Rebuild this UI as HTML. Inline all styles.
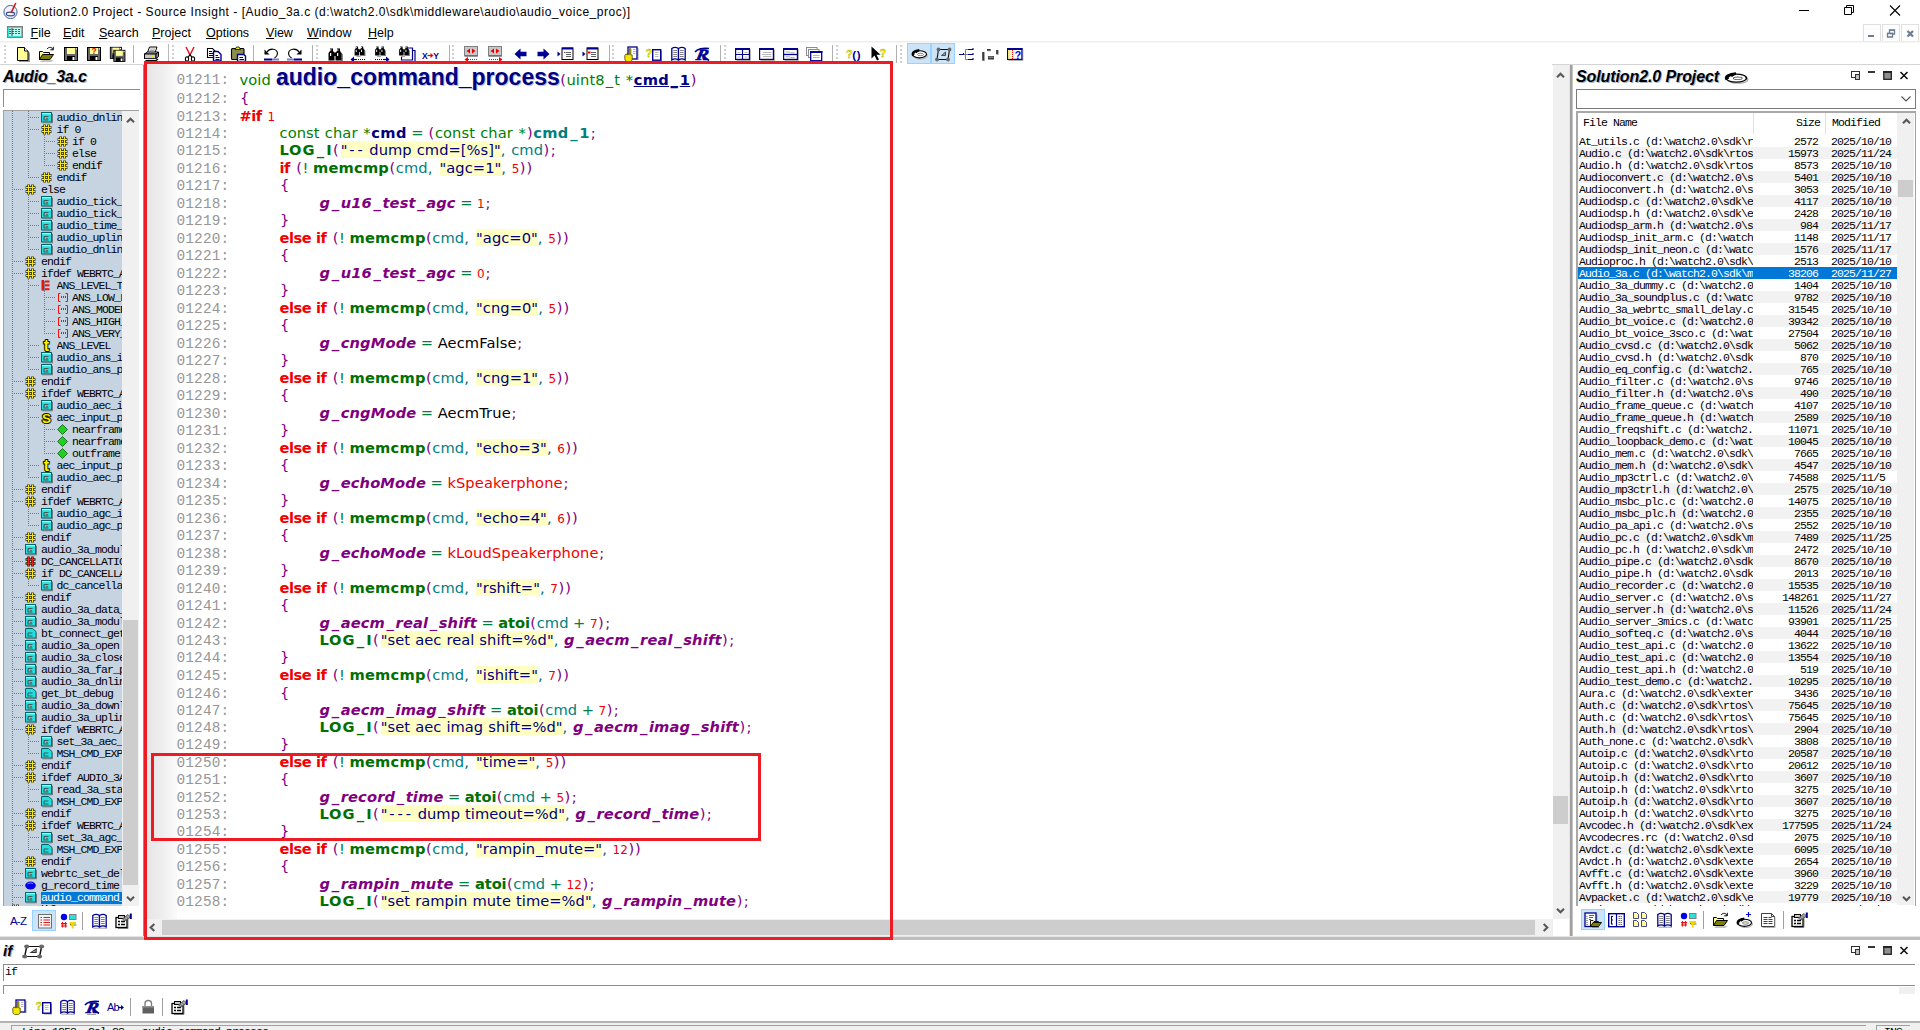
<!DOCTYPE html>
<html><head><meta charset="utf-8"><title>Solution2.0 Project - Source Insight</title>
<style>
*{box-sizing:border-box;margin:0;padding:0}
html,body{width:1920px;height:1030px;overflow:hidden;background:#fff}
body{position:relative;font-family:"Liberation Sans",sans-serif;font-size:12px;color:#000}
.abs{position:absolute}
.ui{font-family:"Liberation Sans",sans-serif}
.mono{font-family:"Liberation Mono",monospace;font-size:11.5px;letter-spacing:-0.9px;white-space:pre}
svg{position:absolute;overflow:visible}
#title{left:23px;top:4px;font-size:12px;line-height:16px;white-space:pre;letter-spacing:0.51px}
.menu{top:25px;font-size:12.5px;line-height:16px;white-space:pre}
.menu u{text-decoration:underline;text-underline-offset:1px}
.ptitle{font-weight:bold;font-style:italic;font-size:16px;line-height:18px;white-space:pre;text-shadow:1px 1px 0 #a8b4c8}
.grip{width:2px;border-left:2px dotted #d0d0d0}
.sep{width:1px;background:#a0a0a0}
/* code */
#code{left:147px;top:64px;width:1405px;height:855px;background:#fff;overflow:hidden}
#gutter{left:0;top:0;width:30px;height:855px;background:linear-gradient(90deg,#e6e6e6 0,#eeeeee 50%,#fafafa 100%)}
.ln{position:absolute;left:29.5px;height:17px;line-height:17px;white-space:pre;font-family:"DejaVu Sans",sans-serif;font-size:14.67px;letter-spacing:0.1px;word-spacing:0.3px;color:#000}
.ln i{font-style:inherit;padding:0 1px}
.pd i,.ld i,.pr i,.fc i,.FC i,.g i,.k i{padding:0 1.5px}
.fn i{padding:0}
.ln .no{display:inline-block;font-family:"Liberation Mono",monospace;font-size:14.4px;letter-spacing:0.16px;color:#969696;line-height:0}
.t{color:#008000}
.p{color:#800080;padding:0 0.45px}
.sc{color:#800080;padding:0 0.85px}
.ln b{font-weight:inherit;padding:0 1.5px}
.op{color:#008040;word-spacing:-0.3px}
.cm{color:#007070;word-spacing:0.8px}
.pd{color:#000080;font-weight:bold;text-decoration:underline;letter-spacing:0.3px}
.ld{color:#000080;font-weight:bold;letter-spacing:0.4px}
.st{color:#008000;padding:0 0.6px}
.pr{color:#008080;font-weight:bold;letter-spacing:0.3px}
.lr{color:#008080}
.fc{color:#007000;font-weight:bold;letter-spacing:0.2px}
.fa{color:#007000;font-weight:bold;letter-spacing:-0.1px}
.FC{color:#007000;font-weight:bold;letter-spacing:0.8px}
.s{color:#000080;background:#ffffc4;margin-left:1.5px;letter-spacing:0.05px}
.n{color:#f00000;font-size:12px}
.k{color:#f00000;font-weight:bold;letter-spacing:-0.5px;margin-right:0.8px}
.g{color:#800080;font-weight:bold;font-style:italic;letter-spacing:0.15px}
.c{color:#000}
.e{color:#f00000}
.fn{line-height:0;font-family:"Liberation Sans",sans-serif;font-weight:bold;font-size:23px;color:#000080;letter-spacing:0;text-shadow:1px 1px 0 #b8c0e0}
/* tree */
#tree{left:3px;top:110px;width:136px;height:796px;background:#c6d3e0;overflow:hidden;border-top:1px solid #a0a0a0;border-left:1px solid #a0a0a0}
.tr{position:absolute;height:12px;line-height:12px;color:#000}

.sb{background:#f0f0f0}
.thumb{background:#cdcdcd}
/* file list */
#flist{left:1576px;top:111px;width:340px;height:795px;background:#fff;overflow:hidden;border:1px solid #a0a0a0;border-top:2px solid #a8a8a8;border-left:2px solid #a8a8a8;border-bottom:none}
.fr{position:absolute;left:0;width:320px;height:12px;line-height:12px}
.fr span{position:absolute;top:1px}
.fr .a{left:1px;width:174px;overflow:hidden}
.fr .b{left:180px;width:60px;text-align:right}
.fr .c{left:253px;color:inherit}
.ev{background:#f2f2f2}
.sel{background:#0078d7;color:#fff}
</style></head><body>

<div class="abs" style="left:0;top:0;width:1920px;height:22px;background:#fff"></div>
<svg style="left:3px;top:2px" width="16" height="17" viewBox="0 0 16 17"><circle cx="7.5" cy="10" r="6.6" fill="#eef3fb" stroke="#4a5f9a" stroke-width="1"/><ellipse cx="7.5" cy="12" rx="4.2" ry="1.8" fill="none" stroke="#33508c" stroke-width="1.2"/><path d="M8 11L12.8 1" stroke="#e01020" stroke-width="1.6"/></svg>
<div id="title" class="abs">Solution2.0 Project - Source Insight - [Audio_3a.c (d:\watch2.0\sdk\middleware\audio\audio_voice_proc)]</div>
<svg style="left:1799px;top:5px" width="110" height="12" viewBox="0 0 110 12"><path d="M0 5.5h10" stroke="#000" stroke-width="1" fill="none"/><path d="M45.5 2.5h7v7h-7zM47.5 2.500v-2h7v7h-2" stroke="#000" stroke-width="1" fill="none"/><path d="M91 0.5l10 10M101 0.5l-10 10" stroke="#000" stroke-width="1.1" fill="none"/></svg>
<svg style="left:7px;top:26px" width="16" height="12" viewBox="0 0 16 12"><rect x="0.5" y="0.5" width="15" height="11" fill="#30e0d0" stroke="#808080"/><rect x="2" y="2" width="12" height="8" fill="#b8fff4"/><path d="M2 3.5h12M2 5.5h12M2 7.5h12" stroke="#008878" stroke-width="1" stroke-dasharray="2 1"/><path d="M5 2v8" stroke="#404040" stroke-width="1"/></svg>
<div class="abs menu" style="left:30.5px"><u>F</u>ile</div>
<div class="abs menu" style="left:63px"><u>E</u>dit</div>
<div class="abs menu" style="left:99px"><u>S</u>earch</div>
<div class="abs menu" style="left:152px"><u>P</u>roject</div>
<div class="abs menu" style="left:206px"><u>O</u>ptions</div>
<div class="abs menu" style="left:266px"><u>V</u>iew</div>
<div class="abs menu" style="left:307px"><u>W</u>indow</div>
<div class="abs menu" style="left:368px"><u>H</u>elp</div>
<div class="abs" style="left:1863px;top:24px;width:18px;height:18px;background:#fdfdfd;border:1px solid #e0e0e0"></div>
<div class="abs" style="left:1882px;top:24px;width:18px;height:18px;background:#fdfdfd;border:1px solid #e0e0e0"></div>
<div class="abs" style="left:1901px;top:24px;width:18px;height:18px;background:#fdfdfd;border:1px solid #e0e0e0"></div>
<svg style="left:1863px;top:24px" width="56" height="17" viewBox="0 0 56 17"><path d="M5 12h6" stroke="#6c7c90" stroke-width="2" fill="none"/><path d="M24.500 9.500h5v3.500h-5zM26.500 9v-3h5v4h-1.500" stroke="#6c7c90" stroke-width="1.300" fill="none"/><path d="M24 9.300h6M26 6.300h6" stroke="#6c7c90" stroke-width="1"/><path d="M44.500 7l5.500 5.500M50 7l-5.500 5.500" stroke="#6c7c90" stroke-width="2.200" fill="none"/></svg>
<div class="abs" style="left:0;top:41px;width:1920px;height:1px;background:#ededed"></div>
<div class="abs" style="left:0;top:42px;width:1920px;height:1px;background:#f6f6f6"></div>
<div class="abs" style="left:0;top:64px;width:1920px;height:1px;background:#d4d4d4"></div>
<div class="abs grip" style="left:4px;top:45px;height:18px"></div>
<div class="abs grip" style="left:172px;top:45px;height:18px"></div>
<div class="abs grip" style="left:316px;top:45px;height:18px"></div>
<div class="abs grip" style="left:452px;top:45px;height:18px"></div>
<div class="abs grip" style="left:612px;top:45px;height:18px"></div>
<div class="abs grip" style="left:724px;top:45px;height:18px"></div>
<div class="abs grip" style="left:836px;top:45px;height:18px"></div>
<div class="abs grip" style="left:900px;top:45px;height:18px"></div>
<div class="abs sep" style="left:133px;top:45px;height:18px;background:#b0b0b0"></div>
<div class="abs sep" style="left:253px;top:45px;height:18px;background:#b0b0b0"></div>
<div class="abs sep" style="left:312px;top:45px;height:18px;background:#b0b0b0"></div>
<div class="abs sep" style="left:449px;top:45px;height:18px;background:#b0b0b0"></div>
<div class="abs sep" style="left:609px;top:45px;height:18px;background:#b0b0b0"></div>
<div class="abs sep" style="left:720px;top:45px;height:18px;background:#b0b0b0"></div>
<div class="abs sep" style="left:832px;top:45px;height:18px;background:#b0b0b0"></div>
<div class="abs sep" style="left:896px;top:45px;height:18px;background:#b0b0b0"></div>
<div class="abs" style="left:168px;top:44px;width:1px;height:20px;background:#b8b8b8"></div>
<div class="abs" style="left:907px;top:43px;width:24px;height:21px;background:#cce4f7;border:1px solid #99d1ff"></div>
<div class="abs" style="left:931px;top:43px;width:24px;height:21px;background:#cce4f7;border:1px solid #99d1ff"></div>
<svg style="left:16px;top:46px" width="17" height="16" viewBox="0 0 17 16"><path d="M3 3h7l4 4v9h-11z" fill="#9a9a9a"/><path d="M1.5 1.5h7l3.5 3.5v9.5h-10.5z" fill="#ffff96" stroke="#000"/><path d="M8.5 1.5v3.5h3.5" fill="#fff" stroke="#000"/></svg>
<svg style="left:38px;top:46px" width="17" height="16" viewBox="0 0 17 16"><path d="M2 15.5h11l3-1h-12z" fill="#8a8a8a"/><path d="M1.5 13.5v-8h3l1 1h6v2" fill="#ffff96" stroke="#000"/><path d="M1.5 13.5l3-5h11l-3.5 5z" fill="#808000" stroke="#000"/><path d="M9 3c2-2.5 5-2 6 0.5M15.3 0.8v3h-3" fill="none" stroke="#000"/></svg>
<svg style="left:63px;top:46px" width="17" height="16" viewBox="0 0 17 16"><g transform="translate(0,0)"><rect x="1.5" y="1.5" width="13" height="13" fill="#686868" stroke="#000"/><rect x="4" y="2" width="8" height="6" fill="#ffff96"/><rect x="4" y="10" width="8" height="4.5" fill="#000"/><rect x="9.5" y="11" width="2" height="3" fill="#fff"/><rect x="12.8" y="2.3" width="1.2" height="1.2" fill="#fff"/></g></svg>
<svg style="left:86px;top:46px" width="17" height="16" viewBox="0 0 17 16"><g transform="translate(0,0)"><rect x="1.5" y="1.5" width="13" height="13" fill="#686868" stroke="#000"/><rect x="4" y="2" width="8" height="6" fill="#ffff96"/><rect x="4" y="10" width="8" height="4.5" fill="#000"/><rect x="9.5" y="11" width="2" height="3" fill="#fff"/><rect x="12.8" y="2.3" width="1.2" height="1.2" fill="#fff"/><text x="8" y="8" font-family="Liberation Sans,sans-serif" font-weight="bold" font-size="8.5" fill="#f00000" text-anchor="middle">?</text></g></svg>
<svg style="left:109px;top:46px" width="17" height="16" viewBox="0 0 17 16"><g transform="scale(.86)"><g transform="translate(0,0)"><rect x="1.5" y="1.5" width="13" height="13" fill="#686868" stroke="#000"/><rect x="4" y="2" width="8" height="6" fill="#ffff96"/><rect x="4" y="10" width="8" height="4.5" fill="#000"/><rect x="9.5" y="11" width="2" height="3" fill="#fff"/><rect x="12.8" y="2.3" width="1.2" height="1.2" fill="#fff"/></g></g><g transform="translate(3.5,3) scale(.86)"><g transform="translate(0,0)"><rect x="1.5" y="1.5" width="13" height="13" fill="#686868" stroke="#000"/><rect x="4" y="2" width="8" height="6" fill="#ffff96"/><rect x="4" y="10" width="8" height="4.5" fill="#000"/><rect x="9.5" y="11" width="2" height="3" fill="#fff"/><rect x="12.8" y="2.3" width="1.2" height="1.2" fill="#fff"/></g></g></svg>
<svg style="left:143px;top:46px" width="17" height="16" viewBox="0 0 17 16"><path d="M4.5 6.5l2-5.5h7.5l-2 5.5z" fill="#fff" stroke="#000"/><path d="M7 3h5M6.500 4.500h5" stroke="#909090" stroke-width=".8"/><path d="M1.500 8l3-2h10.500l-2 2z" fill="#e0e0e0" stroke="#000"/><rect x="1.500" y="8" width="11.500" height="4.500" fill="#c8c8c8" stroke="#000"/><path d="M13 8l2.500-2v4.500l-2.500 2z" fill="#909090" stroke="#000"/><rect x="8" y="9.700" width="3" height="1.300" fill="#e8e800"/><path d="M2.500 14.500h10.500l2-1.500" stroke="#000" stroke-width="1.400" fill="none"/><path d="M2 13.300h11" stroke="#fff" stroke-width=".8"/></svg>
<svg style="left:182px;top:46px" width="17" height="16" viewBox="0 0 17 16"><path d="M4 1l4 8M12 1l-4 8" stroke="#e81020" stroke-width="1.5" fill="none"/><path d="M8 8.5l-2 3M8 8.5l2 3" stroke="#000" stroke-width="1.3"/><ellipse cx="5" cy="13" rx="1.6" ry="2.2" fill="none" stroke="#000" stroke-width="1.1"/><ellipse cx="11" cy="13" rx="1.6" ry="2.2" fill="none" stroke="#000" stroke-width="1.1"/></svg>
<svg style="left:206px;top:46px" width="17" height="16" viewBox="0 0 17 16"><path d="M1.500 2.500h5l2.500 2.500v6.500h-7.500z" fill="#fff" stroke="#000" stroke-width="1.100"/><path d="M3 5.500h3M3 7.500h4.500M3 9.500h4.500" stroke="#000" stroke-width="1"/><path d="M7.500 5.500h4.500l3 3v6.500h-7.500z" fill="#fff" stroke="#000090" stroke-width="1.400"/><path d="M9.500 9.500h2.500M9.500 11.500h4M9.500 13.500h4" stroke="#000090" stroke-width="1"/></svg>
<svg style="left:230px;top:46px" width="17" height="16" viewBox="0 0 17 16"><rect x="1.500" y="2.500" width="12.500" height="11" rx="1" fill="#8c8c50" stroke="#000" stroke-width="1.100"/><path d="M5 3.500l1.500-2.500h2.500l1.500 2.500z" fill="#f0f000" stroke="#000" stroke-width=".8"/><path d="M7.500 8.500h6l2 1.500v5.500h-8z" fill="#fff" stroke="#000090" stroke-width="1.400"/><path d="M9.500 11.500h3.500M9.500 13.500h4.500" stroke="#000090" stroke-width="1"/></svg>
<svg style="left:263px;top:46px" width="17" height="16" viewBox="0 0 17 16"><path d="M4 6c2.500-4 10-4 10.500 1.500c0 2.500-1.500 3.500-3 4.500" fill="none" stroke="#000" stroke-width="1.100"/><path d="M1.500 3.500v5h5z" fill="#000"/><rect x="1" y="12.500" width="8.500" height="2" fill="#000090"/><rect x="10.500" y="12.500" width="1" height="2" fill="#000090"/><rect x="12.500" y="12.500" width="1" height="2" fill="#000090"/><rect x="14.500" y="12.500" width="1" height="2" fill="#000090"/></svg>
<svg style="left:287px;top:46px" width="17" height="16" viewBox="0 0 17 16"><g transform="translate(16,0) scale(-1,1)"><path d="M4 6c2.500-4 10-4 10.500 1.500c0 2.500-1.500 3.500-3 4.500" fill="none" stroke="#000" stroke-width="1.100"/><path d="M1.500 3.500v5h5z" fill="#000"/><rect x="1" y="12.500" width="8.500" height="2" fill="#000090"/><rect x="10.500" y="12.500" width="1" height="2" fill="#000090"/><rect x="12.500" y="12.500" width="1" height="2" fill="#000090"/><rect x="14.500" y="12.500" width="1" height="2" fill="#000090"/></g></svg>
<svg style="left:327px;top:46px" width="17" height="16" viewBox="0 0 17 16"><g transform="translate(0,0) scale(1)"><path d="M4 16.200h5.500v-1h6.500v-7l-2-1.500v8.500h-10z" fill="#8c8c8c"/><path d="M1.500 14.500v-7.500l1.500-2v-2.500h3v2.500l1.500 2v7.500z" fill="#000"/><path d="M8.500 14.500v-7.500l1.500-2v-2.500h3v2.500l1.500 2v7.500z" fill="#000"/><rect x="7" y="6.500" width="2" height="3.500" fill="#000"/><rect x="3" y="7" width="1.200" height="3" fill="#fff"/><rect x="10" y="7" width="1.200" height="3" fill="#fff"/><rect x="3.300" y="3.300" width="1" height="1.500" fill="#fff"/><rect x="10.300" y="3.300" width="1" height="1.500" fill="#fff"/></g></svg>
<svg style="left:350px;top:46px" width="17" height="16" viewBox="0 0 17 16"><g transform="translate(3.5,-1.5) scale(0.75)"><path d="M4 16.200h5.500v-1h6.500v-7l-2-1.500v8.500h-10z" fill="#8c8c8c"/><path d="M1.500 14.500v-7.500l1.500-2v-2.500h3v2.500l1.500 2v7.500z" fill="#000"/><path d="M8.500 14.500v-7.500l1.500-2v-2.500h3v2.500l1.500 2v7.500z" fill="#000"/><rect x="7" y="6.500" width="2" height="3.500" fill="#000"/><rect x="3" y="7" width="1.200" height="3" fill="#fff"/><rect x="10" y="7" width="1.200" height="3" fill="#fff"/><rect x="3.300" y="3.300" width="1" height="1.500" fill="#fff"/><rect x="10.300" y="3.300" width="1" height="1.500" fill="#fff"/></g><path d="M6 13.500h9" stroke="#000090" stroke-width="1.200" stroke-dasharray="1 1"/><path d="M1 13.500h5" stroke="#000090" stroke-width="1.200"/><path d="M0.500 13.500l3.500-3v6z" fill="#000090"/></svg>
<svg style="left:374px;top:46px" width="17" height="16" viewBox="0 0 17 16"><g transform="translate(0,-1.5) scale(0.75)"><path d="M4 16.200h5.500v-1h6.500v-7l-2-1.500v8.500h-10z" fill="#8c8c8c"/><path d="M1.500 14.500v-7.500l1.500-2v-2.500h3v2.500l1.500 2v7.500z" fill="#000"/><path d="M8.500 14.500v-7.500l1.500-2v-2.500h3v2.500l1.500 2v7.500z" fill="#000"/><rect x="7" y="6.500" width="2" height="3.500" fill="#000"/><rect x="3" y="7" width="1.200" height="3" fill="#fff"/><rect x="10" y="7" width="1.200" height="3" fill="#fff"/><rect x="3.300" y="3.300" width="1" height="1.500" fill="#fff"/><rect x="10.300" y="3.300" width="1" height="1.500" fill="#fff"/></g><path d="M1 13.500h9" stroke="#000090" stroke-width="1.200" stroke-dasharray="1 1"/><path d="M10 13.500h5" stroke="#000090" stroke-width="1.200"/><path d="M15.500 13.500l-3.500-3v6z" fill="#000090"/></svg>
<svg style="left:398px;top:46px" width="17" height="16" viewBox="0 0 17 16"><path d="M9 2h5.500v12h-11v-3" fill="none" stroke="#000090" stroke-width="1.200"/><path d="M14.500 4.500h2.500v11h-12" fill="none" stroke="#000090" stroke-width="1.200"/><g transform="translate(0,-1.5) scale(0.75)"><path d="M4 16.200h5.500v-1h6.500v-7l-2-1.500v8.500h-10z" fill="#8c8c8c"/><path d="M1.500 14.500v-7.500l1.500-2v-2.500h3v2.500l1.500 2v7.500z" fill="#000"/><path d="M8.500 14.500v-7.500l1.500-2v-2.500h3v2.500l1.500 2v7.500z" fill="#000"/><rect x="7" y="6.500" width="2" height="3.500" fill="#000"/><rect x="3" y="7" width="1.200" height="3" fill="#fff"/><rect x="10" y="7" width="1.200" height="3" fill="#fff"/><rect x="3.300" y="3.300" width="1" height="1.500" fill="#fff"/><rect x="10.300" y="3.300" width="1" height="1.500" fill="#fff"/></g></svg>
<svg style="left:422px;top:46px" width="17" height="16" viewBox="0 0 17 16"><text x="0" y="12.500" font-family="Liberation Sans,sans-serif" font-weight="bold" font-size="8.500" fill="#000090">X</text><text x="11.300" y="12.500" font-family="Liberation Sans,sans-serif" font-weight="bold" font-size="8.500" fill="#000090">Y</text><path d="M5.500 9.500h4" stroke="#f00000" stroke-width="1.200"/><path d="M11.500 9.500l-3-2.500v5z" fill="#f00000"/></svg>
<svg style="left:464px;top:46px" width="17" height="16" viewBox="0 0 17 16"><rect x="0.500" y="0.500" width="13" height="9.500" fill="#c8c8c8" stroke="#808080"/><rect x="1" y="9" width="12.5" height="1.5" fill="#707070"/><path d="M2.500 5l3.500-2.500v5zM11.500 5l-3.500-2.500v5z" fill="#f00000"/><path d="M4 13.500h10" stroke="#f00000" stroke-width="1.200" stroke-dasharray="1 1"/><path d="M0.500 13.500l3.500-2.500v5z" fill="#f00000"/></svg>
<svg style="left:488px;top:46px" width="17" height="16" viewBox="0 0 17 16"><rect x="0.500" y="0.500" width="13" height="9.500" fill="#c8c8c8" stroke="#808080"/><rect x="1" y="9" width="12.5" height="1.5" fill="#707070"/><path d="M2.500 5l3.500-2.500v5zM11.500 5l-3.500-2.500v5z" fill="#f00000"/><path d="M1 13.500h10" stroke="#f00000" stroke-width="1.200" stroke-dasharray="1 1"/><path d="M14.500 13.500l-3.500-2.500v5z" fill="#f00000"/></svg>
<svg style="left:514px;top:46px" width="17" height="16" viewBox="0 0 17 16"><path d="M0.500 8l6-5.500v3.200h6v4.600h-6v3.200z" fill="#000090"/></svg>
<svg style="left:537px;top:46px" width="17" height="16" viewBox="0 0 17 16"><path d="M12.500 8l-6-5.500v3.200h-6v4.600h6v3.200z" fill="#000090"/></svg>
<svg style="left:557px;top:46px" width="17" height="16" viewBox="0 0 17 16"><path d="M0.500 5.500l3 2.500l-3 2.500z" fill="#000090"/><rect x="5" y="2" width="11" height="11.500" fill="#fff" stroke="#000"/><rect x="5" y="1.500" width="11" height="2" fill="#000090"/><path d="M9 6.500h5M9 8.500h5M9 10.500h5" stroke="#606060" stroke-width="1"/><path d="M7 6.500h1.500" stroke="#606060" stroke-width="1"/></svg>
<svg style="left:582px;top:46px" width="17" height="16" viewBox="0 0 17 16"><path d="M0.500 5.500l3 2.500l-3 2.500z" fill="#000090"/><rect x="5" y="2" width="11" height="11.500" fill="#fff" stroke="#000"/><rect x="5" y="1.500" width="11" height="2" fill="#000090"/><path d="M9 6.500h5M9 8.500h5M9 10.500h5" stroke="#606060" stroke-width="1"/><rect x="6" y="5.500" width="2.500" height="2" fill="#f00000"/></svg>
<svg style="left:623px;top:46px" width="17" height="16" viewBox="0 0 17 16"><rect x="14.500" y="2" width="1" height="12" fill="#a0a0a0"/><rect x="5" y="1" width="9" height="12" fill="#fff" stroke="#000090" stroke-width="1.300"/><path d="M10 3.500h2.500M10 5.500h2.500M10 7.500h2.500" stroke="#b0b0b0" stroke-width="1"/><path d="M1.800 9.500v3c0 2 1 3 2.700 3h2.200c1.500 0 2.500-1 2.500-2.500v-4h-1.400v-6.300h-1.500v6h-.6v-1h-1.200v1h-.6v-.6h-1.100z" fill="#f4e800" stroke="#504000" stroke-width=".8"/></svg>
<svg style="left:646px;top:46px" width="17" height="16" viewBox="0 0 17 16"><text x="-0.500" y="10.500" font-family="Liberation Sans,sans-serif" font-weight="bold" font-size="11" fill="#fcf400" stroke="#909000" stroke-width=".3">?</text><rect x="15" y="5" width="1" height="10" fill="#a0a0a0"/><rect x="8" y="14.500" width="8" height="1" fill="#a0a0a0"/><rect x="6.700" y="3.700" width="8" height="10.500" fill="#fff" stroke="#000090" stroke-width="1.400"/><path d="M9 6.500h3.500M9 8.500h3.500M9 10.500h3.500" stroke="#b8b8b8" stroke-width="1"/></svg>
<svg style="left:671px;top:46px" width="17" height="16" viewBox="0 0 17 16"><path d="M0.800 2.500c2-1.300 4.500-1.300 6.700 0v11.500c-2.200-1.300-4.700-1.300-6.700 0z" fill="#fff" stroke="#000090" stroke-width="1.300"/><path d="M7.500 2.500c2.200-1.300 4.700-1.300 6.700 0v11.500c-2-1.300-4.500-1.300-6.700 0z" fill="#fff" stroke="#000090" stroke-width="1.300"/><path d="M2.300 4.500h3.700M2.300 6.500h3.700M2.300 8.500h3.700M2.300 10.500h3.700M9 4.500h3.700M9 6.500h3.700M9 8.500h3.700M9 10.500h3.700" stroke="#707070" stroke-width=".9"/><path d="M1.500 15.200h13.500" stroke="#a0a0a0" stroke-width="1"/></svg>
<svg style="left:694px;top:46px" width="17" height="16" viewBox="0 0 17 16"><text x="1" y="13.500" font-family="Liberation Serif,serif" font-weight="bold" font-style="italic" font-size="16" fill="#000090" stroke="#000090" stroke-width=".6" transform="skewX(-12) translate(3,0) scale(1.15,1)">R</text><path d="M1 6c2-3 8-4.500 14-3.500" stroke="#000090" stroke-width="1.500" fill="none"/><path d="M9 10l6 4.500" stroke="#000090" stroke-width="1.600"/><path d="M3 15.500h9" stroke="#a0a0a0" stroke-width="1"/></svg>
<svg style="left:735px;top:46px" width="17" height="16" viewBox="0 0 17 16"><rect x="14.800" y="3.500" width="1" height="11" fill="#a0a0a0"/><rect x="1.500" y="13.800" width="14" height="1" fill="#a0a0a0"/><rect x="0.600" y="2.600" width="13.800" height="10.800" fill="#fff" stroke="#000090" stroke-width="1.200"/><rect x="0" y="2" width="15" height="2" fill="#000090"/><path d="M7.500 3v10.500M0.500 8.500h14" stroke="#000090" stroke-width="1.200"/><path d="M2.500 6.500h3M9.500 6.500h3M2.500 11h3M9.500 11h3" stroke="#b8b8b8" stroke-width="1"/></svg>
<svg style="left:759px;top:46px" width="17" height="16" viewBox="0 0 17 16"><rect x="14.800" y="3.500" width="1" height="11" fill="#a0a0a0"/><rect x="1.500" y="13.800" width="14" height="1" fill="#a0a0a0"/><rect x="0.600" y="2.600" width="13.800" height="10.800" fill="#fff" stroke="#000090" stroke-width="1.200"/><rect x="0" y="2" width="15" height="2" fill="#000090"/><path d="M4 6.500h8.500M3 8.500h9.500M4 10.500h8.500" stroke="#b8b8b8" stroke-width="1"/></svg>
<svg style="left:783px;top:46px" width="17" height="16" viewBox="0 0 17 16"><rect x="14.800" y="3.500" width="1" height="11" fill="#a0a0a0"/><rect x="1.500" y="13.800" width="14" height="1" fill="#a0a0a0"/><rect x="0.600" y="2.600" width="13.800" height="10.800" fill="#fff" stroke="#000090" stroke-width="1.200"/><rect x="0" y="2" width="15" height="2" fill="#000090"/><path d="M0.500 8.500h14" stroke="#000090" stroke-width="1.300"/><path d="M2.500 6h4l1 .8h4M2.500 10.800h4l1 .8h4" stroke="#a0a0a0" stroke-width=".9" fill="none"/></svg>
<svg style="left:806px;top:46px" width="17" height="16" viewBox="0 0 17 16"><rect x="0.500" y="1.500" width="10.500" height="8" fill="#fff" stroke="#8c8c8c"/><rect x="2.500" y="3.500" width="10.500" height="8" fill="#fff" stroke="#8c8c8c"/><rect x="4.700" y="5.700" width="11" height="9" fill="#fff" stroke="#000090" stroke-width="1.300"/><rect x="4" y="5" width="12.400" height="2" fill="#000090"/><path d="M7 9.500h6.500M7 11.500h6.500" stroke="#b0b0b0" stroke-width="1"/></svg>
<svg style="left:846px;top:46px" width="17" height="16" viewBox="0 0 17 16"><text x="0" y="11.500" font-family="Liberation Sans,sans-serif" font-weight="bold" font-size="11" fill="#fcf400" stroke="#909000" stroke-width=".3">?</text><text x="6.300" y="12.500" font-family="Liberation Sans,sans-serif" font-weight="bold" font-size="11.500" fill="#000090" letter-spacing="0.5">()</text></svg>
<svg style="left:871px;top:46px" width="17" height="16" viewBox="0 0 17 16"><path d="M0.500 0.500v12l3-3l2.500 5l2-1l-2.500-4.800h4z" fill="#000"/><text x="8.500" y="11" font-family="Liberation Sans,sans-serif" font-weight="bold" font-size="11" fill="#fcf400" stroke="#909000" stroke-width=".3">?</text></svg>
<svg style="left:911px;top:46px" width="17" height="16" viewBox="0 0 17 16"><ellipse cx="9.500" cy="9.500" rx="7" ry="3.500" fill="none" stroke="#a8a8a8" stroke-width="1"/><ellipse cx="8.500" cy="8.300" rx="7" ry="3.600" fill="#fff" stroke="#000" stroke-width="1.100"/><path d="M2.300 9.500c-1.500-2.500 1.500-5 6-5.300" fill="none" stroke="#000" stroke-width="2.600"/><path d="M7.500 4.500l-2.500 2.200" stroke="#000" stroke-width="1.500"/><ellipse cx="9.500" cy="8.500" rx="3" ry="1.200" fill="none" stroke="#606060" stroke-width=".8"/></svg>
<svg style="left:935px;top:46px" width="17" height="16" viewBox="0 0 17 16"><path d="M3.500 3.500h11l-1.500 10h-11z" fill="none" stroke="#101010" stroke-width="1.100"/><path d="M6.500 9.500h4v-3.500z" fill="#a0a0a0" stroke="#303030" stroke-width=".8"/><circle cx="3.500" cy="3.500" r="1.900" fill="#686868"/><circle cx="14.500" cy="3.500" r="1.900" fill="#686868"/><circle cx="2" cy="13.500" r="1.900" fill="#686868"/><circle cx="13" cy="13.500" r="1.900" fill="#686868"/></svg>
<svg style="left:959px;top:46px" width="17" height="16" viewBox="0 0 17 16"><path d="M4 8.500h2.500M6.500 3.500v10M6.500 3.500h3M6.500 8.500h3M6.500 13.500h3" fill="none" stroke="#808080" stroke-width="1.100"/><path d="M0 8.500h4.500v-1.500M9 3.500h5v-1.500M9 8.500h5v-1.500M9 13.500h5v-1.500" fill="none" stroke="#000090" stroke-width="1.100"/></svg>
<svg style="left:982px;top:46px" width="17" height="16" viewBox="0 0 17 16"><rect x="0.300" y="6" width="2.500" height="9" fill="#909090"/><rect x="0.300" y="6" width="1.700" height="8.300" fill="#383838"/><rect x="5" y="3" width="4" height="2.200" fill="#909090"/><rect x="5" y="3" width="3.300" height="1.500" fill="#383838"/><rect x="6" y="10" width="6" height="3.500" fill="#383838"/><rect x="6.500" y="10.500" width="5" height="1.500" fill="#808080"/><rect x="14.200" y="4" width="2.500" height="4.700" fill="#909090"/><rect x="14.200" y="4" width="1.700" height="4" fill="#383838"/></svg>
<svg style="left:1007px;top:46px" width="17" height="16" viewBox="0 0 17 16"><rect x="15.300" y="3.500" width="1" height="11" fill="#a0a0a0"/><rect x="1.500" y="13.800" width="14.500" height="1" fill="#a0a0a0"/><rect x="0.600" y="2.600" width="14.300" height="10.800" fill="#fff" stroke="#000090" stroke-width="1.200"/><rect x="0" y="2" width="15.500" height="2" fill="#000090"/><rect x="1.200" y="4" width="2.300" height="8.800" fill="#f8ec70"/><path d="M5.500 4v9" stroke="#f00000" stroke-width="1" stroke-dasharray="1 1"/><text x="7.800" y="12.500" font-family="Liberation Sans,sans-serif" font-weight="bold" font-size="10.500" fill="#0000e8">?</text></svg>
<div class="abs ptitle" style="left:3px;top:68px;font-size:16px;letter-spacing:-0.15px">Audio_3a.c</div>
<div class="abs" style="left:3px;top:89px;width:137px;height:18px;background:#fff;border-top:1px solid #8c8c8c;border-left:1px solid #8c8c8c"></div>
<div id="tree" class="abs">
<svg style="left:0px;top:0px" width="120" height="800" viewBox="0 0 120 800"><path d="M26 6.5H36 M24.5 0V7 M26 18.5H36 M24.5 0V19 M42 30.5H52 M40.5 24V31 M42 42.5H52 M40.5 24V43 M42 54.5H52 M40.5 24V55 M26 66.5H36 M24.5 0V67 M10 78.5H20 M8.5 0V79 M26 90.5H36 M24.5 84V91 M26 102.5H36 M24.5 84V103 M26 114.5H36 M24.5 84V115 M26 126.5H36 M24.5 84V127 M26 138.5H36 M24.5 84V139 M10 150.5H20 M8.5 0V151 M10 162.5H20 M8.5 0V163 M26 174.5H36 M24.5 168V175 M42 186.5H52 M40.5 180V187 M42 198.5H52 M40.5 180V199 M42 210.5H52 M40.5 180V211 M42 222.5H52 M40.5 180V223 M26 234.5H36 M24.5 168V235 M26 246.5H36 M24.5 168V247 M26 258.5H36 M24.5 168V259 M10 270.5H20 M8.5 0V271 M10 282.5H20 M8.5 0V283 M26 294.5H36 M24.5 288V295 M26 306.5H36 M24.5 288V307 M42 318.5H52 M40.5 312V319 M42 330.5H52 M40.5 312V331 M42 342.5H52 M40.5 312V343 M26 354.5H36 M24.5 288V355 M26 366.5H36 M24.5 288V367 M10 378.5H20 M8.5 0V379 M10 390.5H20 M8.5 0V391 M26 402.5H36 M24.5 396V403 M26 414.5H36 M24.5 396V415 M10 426.5H20 M8.5 0V427 M10 438.5H20 M8.5 0V439 M10 450.5H20 M8.5 0V451 M10 462.5H20 M8.5 0V463 M26 474.5H36 M24.5 468V475 M10 486.5H20 M8.5 0V487 M10 498.5H20 M8.5 0V499 M10 510.5H20 M8.5 0V511 M10 522.5H20 M8.5 0V523 M10 534.5H20 M8.5 0V535 M10 546.5H20 M8.5 0V547 M10 558.5H20 M8.5 0V559 M10 570.5H20 M8.5 0V571 M10 582.5H20 M8.5 0V583 M10 594.5H20 M8.5 0V595 M10 606.5H20 M8.5 0V607 M10 618.5H20 M8.5 0V619 M26 630.5H36 M24.5 624V631 M26 642.5H36 M24.5 624V643 M10 654.5H20 M8.5 0V655 M10 666.5H20 M8.5 0V667 M26 678.5H36 M24.5 672V679 M26 690.5H36 M24.5 672V691 M10 702.5H20 M8.5 0V703 M10 714.5H20 M8.5 0V715 M26 726.5H36 M24.5 720V727 M26 738.5H36 M24.5 720V739 M10 750.5H20 M8.5 0V751 M10 762.5H20 M8.5 0V763 M10 774.5H20 M8.5 0V775 M10 786.5H20 M8.5 0V787 M8.5 0V800" stroke="#707880" stroke-width="1" stroke-dasharray="1 1" fill="none"/></svg>
<svg style="left:37px;top:1px" width="12" height="12" viewBox="0 0 12 12"><rect x="0.500" y="0.500" width="10" height="9.500" fill="#20e0e0" stroke="#006868"/><rect x="1" y="1" width="9" height="1.200" fill="#a0ffff"/><path d="M3 4.500h4.500M3 4.500v3.500h4.500" stroke="#405858" stroke-width="1.100" fill="none"/><rect x="5" y="6" width="2" height="1.500" fill="#607070"/><path d="M1.500 10.800h10v-9" stroke="#707880" stroke-width="1" fill="none"/></svg>
<div class="tr mono" style="left:52.5px;top:1px;width:65.5px;overflow:hidden;">audio_dnlink_</div>
<svg style="left:37px;top:13px" width="12" height="12" viewBox="0 0 12 12"><path d="M3.500 0.500v10M7.500 0.500v10M0.500 3.500h10M0.500 7.500h10" stroke="#202000" stroke-width="2.600"/><path d="M3.500 0.800v9.400M7.500 0.800v9.400M0.800 3.500h9.400M0.800 7.500h9.400" stroke="#ffe800" stroke-width="1.200"/></svg>
<div class="tr mono" style="left:52.5px;top:13px;width:65.5px;overflow:hidden;">if 0</div>
<svg style="left:53px;top:25px" width="12" height="12" viewBox="0 0 12 12"><path d="M3.500 0.500v10M7.500 0.500v10M0.500 3.500h10M0.500 7.500h10" stroke="#202000" stroke-width="2.600"/><path d="M3.500 0.800v9.400M7.500 0.800v9.400M0.800 3.500h9.400M0.800 7.500h9.400" stroke="#ffe800" stroke-width="1.200"/></svg>
<div class="tr mono" style="left:68px;top:25px;width:50px;overflow:hidden;">if 0</div>
<svg style="left:53px;top:37px" width="12" height="12" viewBox="0 0 12 12"><path d="M3.500 0.500v10M7.500 0.500v10M0.500 3.500h10M0.500 7.500h10" stroke="#202000" stroke-width="2.600"/><path d="M3.500 0.800v9.400M7.500 0.800v9.400M0.800 3.500h9.400M0.800 7.500h9.400" stroke="#ffe800" stroke-width="1.200"/></svg>
<div class="tr mono" style="left:68px;top:37px;width:50px;overflow:hidden;">else</div>
<svg style="left:53px;top:49px" width="12" height="12" viewBox="0 0 12 12"><path d="M3.500 0.500v10M7.500 0.500v10M0.500 3.500h10M0.500 7.500h10" stroke="#202000" stroke-width="2.600"/><path d="M3.500 0.800v9.400M7.500 0.800v9.400M0.800 3.500h9.400M0.800 7.500h9.400" stroke="#ffe800" stroke-width="1.200"/></svg>
<div class="tr mono" style="left:68px;top:49px;width:50px;overflow:hidden;">endif</div>
<svg style="left:37px;top:61px" width="12" height="12" viewBox="0 0 12 12"><path d="M3.500 0.500v10M7.500 0.500v10M0.500 3.500h10M0.500 7.500h10" stroke="#202000" stroke-width="2.600"/><path d="M3.500 0.800v9.400M7.500 0.800v9.400M0.800 3.500h9.400M0.800 7.500h9.400" stroke="#ffe800" stroke-width="1.200"/></svg>
<div class="tr mono" style="left:52.5px;top:61px;width:65.5px;overflow:hidden;">endif</div>
<svg style="left:21px;top:73px" width="12" height="12" viewBox="0 0 12 12"><path d="M3.500 0.500v10M7.500 0.500v10M0.500 3.500h10M0.500 7.500h10" stroke="#202000" stroke-width="2.600"/><path d="M3.500 0.800v9.400M7.500 0.800v9.400M0.800 3.500h9.400M0.800 7.500h9.400" stroke="#ffe800" stroke-width="1.200"/></svg>
<div class="tr mono" style="left:37px;top:73px;width:81px;overflow:hidden;">else</div>
<svg style="left:37px;top:85px" width="12" height="12" viewBox="0 0 12 12"><rect x="0.500" y="0.500" width="10" height="9.500" fill="#20e0e0" stroke="#006868"/><rect x="1" y="1" width="9" height="1.200" fill="#a0ffff"/><path d="M3 4.500h4.500M3 4.500v3.500h4.500" stroke="#405858" stroke-width="1.100" fill="none"/><rect x="5" y="6" width="2" height="1.500" fill="#607070"/><path d="M1.500 10.800h10v-9" stroke="#707880" stroke-width="1" fill="none"/></svg>
<div class="tr mono" style="left:52.5px;top:85px;width:65.5px;overflow:hidden;">audio_tick_</div>
<svg style="left:37px;top:97px" width="12" height="12" viewBox="0 0 12 12"><rect x="0.500" y="0.500" width="10" height="9.500" fill="#20e0e0" stroke="#006868"/><rect x="1" y="1" width="9" height="1.200" fill="#a0ffff"/><path d="M3 4.500h4.500M3 4.500v3.500h4.500" stroke="#405858" stroke-width="1.100" fill="none"/><rect x="5" y="6" width="2" height="1.500" fill="#607070"/><path d="M1.500 10.800h10v-9" stroke="#707880" stroke-width="1" fill="none"/></svg>
<div class="tr mono" style="left:52.5px;top:97px;width:65.5px;overflow:hidden;">audio_tick_</div>
<svg style="left:37px;top:109px" width="12" height="12" viewBox="0 0 12 12"><rect x="0.500" y="0.500" width="10" height="9.500" fill="#20e0e0" stroke="#006868"/><rect x="1" y="1" width="9" height="1.200" fill="#a0ffff"/><path d="M3 4.500h4.500M3 4.500v3.500h4.500" stroke="#405858" stroke-width="1.100" fill="none"/><rect x="5" y="6" width="2" height="1.500" fill="#607070"/><path d="M1.500 10.800h10v-9" stroke="#707880" stroke-width="1" fill="none"/></svg>
<div class="tr mono" style="left:52.5px;top:109px;width:65.5px;overflow:hidden;">audio_time_</div>
<svg style="left:37px;top:121px" width="12" height="12" viewBox="0 0 12 12"><rect x="0.500" y="0.500" width="10" height="9.500" fill="#20e0e0" stroke="#006868"/><rect x="1" y="1" width="9" height="1.200" fill="#a0ffff"/><path d="M3 4.500h4.500M3 4.500v3.500h4.500" stroke="#405858" stroke-width="1.100" fill="none"/><rect x="5" y="6" width="2" height="1.500" fill="#607070"/><path d="M1.500 10.800h10v-9" stroke="#707880" stroke-width="1" fill="none"/></svg>
<div class="tr mono" style="left:52.5px;top:121px;width:65.5px;overflow:hidden;">audio_uplin</div>
<svg style="left:37px;top:133px" width="12" height="12" viewBox="0 0 12 12"><rect x="0.500" y="0.500" width="10" height="9.500" fill="#20e0e0" stroke="#006868"/><rect x="1" y="1" width="9" height="1.200" fill="#a0ffff"/><path d="M3 4.500h4.500M3 4.500v3.500h4.500" stroke="#405858" stroke-width="1.100" fill="none"/><rect x="5" y="6" width="2" height="1.500" fill="#607070"/><path d="M1.500 10.800h10v-9" stroke="#707880" stroke-width="1" fill="none"/></svg>
<div class="tr mono" style="left:52.5px;top:133px;width:65.5px;overflow:hidden;">audio_dnlin</div>
<svg style="left:21px;top:145px" width="12" height="12" viewBox="0 0 12 12"><path d="M3.500 0.500v10M7.500 0.500v10M0.500 3.500h10M0.500 7.500h10" stroke="#202000" stroke-width="2.600"/><path d="M3.500 0.800v9.400M7.500 0.800v9.400M0.800 3.500h9.400M0.800 7.500h9.400" stroke="#ffe800" stroke-width="1.200"/></svg>
<div class="tr mono" style="left:37px;top:145px;width:81px;overflow:hidden;">endif</div>
<svg style="left:21px;top:157px" width="12" height="12" viewBox="0 0 12 12"><path d="M3.500 0.500v10M7.500 0.500v10M0.500 3.500h10M0.500 7.500h10" stroke="#202000" stroke-width="2.600"/><path d="M3.500 0.800v9.400M7.500 0.800v9.400M0.800 3.500h9.400M0.800 7.500h9.400" stroke="#ffe800" stroke-width="1.200"/></svg>
<div class="tr mono" style="left:37px;top:157px;width:81px;overflow:hidden;">ifdef WEBRTC_AN</div>
<svg style="left:37px;top:169px" width="12" height="12" viewBox="0 0 12 12"><rect x="1.500" y="1" width="2.600" height="10" fill="#808890"/><rect x="0.500" y="0" width="2.600" height="10.500" fill="#f01010"/><rect x="4" y="0.500" width="4.500" height="2" fill="#f01010"/><rect x="4" y="4.300" width="4.500" height="2" fill="#f01010"/><rect x="4" y="8.200" width="4.500" height="2" fill="#f01010"/></svg>
<div class="tr mono" style="left:52.5px;top:169px;width:65.5px;overflow:hidden;">ANS_LEVEL_T</div>
<svg style="left:53px;top:181px" width="12" height="12" viewBox="0 0 12 12"><path d="M3.500 1.500h-2v8h2M8.500 1.500h2v8h-2" stroke="#f01010" stroke-width="1" fill="none"/><rect x="4" y="4" width="1" height="2" fill="#f01010"/><rect x="6" y="4" width="1" height="2" fill="#f01010"/><rect x="8" y="4" width="1" height="2" fill="#f01010"/></svg>
<div class="tr mono" style="left:68px;top:181px;width:50px;overflow:hidden;">ANS_LOW_L</div>
<svg style="left:53px;top:193px" width="12" height="12" viewBox="0 0 12 12"><path d="M3.500 1.500h-2v8h2M8.500 1.500h2v8h-2" stroke="#f01010" stroke-width="1" fill="none"/><rect x="4" y="4" width="1" height="2" fill="#f01010"/><rect x="6" y="4" width="1" height="2" fill="#f01010"/><rect x="8" y="4" width="1" height="2" fill="#f01010"/></svg>
<div class="tr mono" style="left:68px;top:193px;width:50px;overflow:hidden;">ANS_MODER</div>
<svg style="left:53px;top:205px" width="12" height="12" viewBox="0 0 12 12"><path d="M3.500 1.500h-2v8h2M8.500 1.500h2v8h-2" stroke="#f01010" stroke-width="1" fill="none"/><rect x="4" y="4" width="1" height="2" fill="#f01010"/><rect x="6" y="4" width="1" height="2" fill="#f01010"/><rect x="8" y="4" width="1" height="2" fill="#f01010"/></svg>
<div class="tr mono" style="left:68px;top:205px;width:50px;overflow:hidden;">ANS_HIGH_</div>
<svg style="left:53px;top:217px" width="12" height="12" viewBox="0 0 12 12"><path d="M3.500 1.500h-2v8h2M8.500 1.500h2v8h-2" stroke="#f01010" stroke-width="1" fill="none"/><rect x="4" y="4" width="1" height="2" fill="#f01010"/><rect x="6" y="4" width="1" height="2" fill="#f01010"/><rect x="8" y="4" width="1" height="2" fill="#f01010"/></svg>
<div class="tr mono" style="left:68px;top:217px;width:50px;overflow:hidden;">ANS_VERY_</div>
<svg style="left:37px;top:229px" width="12" height="12" viewBox="0 0 12 12"><text x="5.500" y="10.500" text-anchor="middle" font-family="Liberation Sans,sans-serif" font-weight="bold" font-size="16" fill="#ffee00" stroke="#101000" stroke-width="2" paint-order="stroke">t</text></svg>
<div class="tr mono" style="left:52.5px;top:229px;width:65.5px;overflow:hidden;">ANS_LEVEL</div>
<svg style="left:37px;top:241px" width="12" height="12" viewBox="0 0 12 12"><rect x="0.500" y="0.500" width="10" height="9.500" fill="#20e0e0" stroke="#006868"/><rect x="1" y="1" width="9" height="1.200" fill="#a0ffff"/><path d="M3 4.500h4.500M3 4.500v3.500h4.500" stroke="#405858" stroke-width="1.100" fill="none"/><rect x="5" y="6" width="2" height="1.500" fill="#607070"/><path d="M1.500 10.800h10v-9" stroke="#707880" stroke-width="1" fill="none"/></svg>
<div class="tr mono" style="left:52.5px;top:241px;width:65.5px;overflow:hidden;">audio_ans_i</div>
<svg style="left:37px;top:253px" width="12" height="12" viewBox="0 0 12 12"><rect x="0.500" y="0.500" width="10" height="9.500" fill="#20e0e0" stroke="#006868"/><rect x="1" y="1" width="9" height="1.200" fill="#a0ffff"/><path d="M3 4.500h4.500M3 4.500v3.500h4.500" stroke="#405858" stroke-width="1.100" fill="none"/><rect x="5" y="6" width="2" height="1.500" fill="#607070"/><path d="M1.500 10.800h10v-9" stroke="#707880" stroke-width="1" fill="none"/></svg>
<div class="tr mono" style="left:52.5px;top:253px;width:65.5px;overflow:hidden;">audio_ans_p</div>
<svg style="left:21px;top:265px" width="12" height="12" viewBox="0 0 12 12"><path d="M3.500 0.500v10M7.500 0.500v10M0.500 3.500h10M0.500 7.500h10" stroke="#202000" stroke-width="2.600"/><path d="M3.500 0.800v9.400M7.500 0.800v9.400M0.800 3.500h9.400M0.800 7.500h9.400" stroke="#ffe800" stroke-width="1.200"/></svg>
<div class="tr mono" style="left:37px;top:265px;width:81px;overflow:hidden;">endif</div>
<svg style="left:21px;top:277px" width="12" height="12" viewBox="0 0 12 12"><path d="M3.500 0.500v10M7.500 0.500v10M0.500 3.500h10M0.500 7.500h10" stroke="#202000" stroke-width="2.600"/><path d="M3.500 0.800v9.400M7.500 0.800v9.400M0.800 3.500h9.400M0.800 7.500h9.400" stroke="#ffe800" stroke-width="1.200"/></svg>
<div class="tr mono" style="left:37px;top:277px;width:81px;overflow:hidden;">ifdef WEBRTC_AE</div>
<svg style="left:37px;top:289px" width="12" height="12" viewBox="0 0 12 12"><rect x="0.500" y="0.500" width="10" height="9.500" fill="#20e0e0" stroke="#006868"/><rect x="1" y="1" width="9" height="1.200" fill="#a0ffff"/><path d="M3 4.500h4.500M3 4.500v3.500h4.500" stroke="#405858" stroke-width="1.100" fill="none"/><rect x="5" y="6" width="2" height="1.500" fill="#607070"/><path d="M1.500 10.800h10v-9" stroke="#707880" stroke-width="1" fill="none"/></svg>
<div class="tr mono" style="left:52.5px;top:289px;width:65.5px;overflow:hidden;">audio_aec_i</div>
<svg style="left:37px;top:301px" width="12" height="12" viewBox="0 0 12 12"><text x="5.500" y="10.500" text-anchor="middle" font-family="Liberation Sans,sans-serif" font-weight="bold" font-size="13.5" fill="#ffee00" stroke="#101000" stroke-width="2" paint-order="stroke">S</text></svg>
<div class="tr mono" style="left:52.5px;top:301px;width:65.5px;overflow:hidden;">aec_input_p</div>
<svg style="left:53px;top:313px" width="12" height="12" viewBox="0 0 12 12"><path d="M5.500 0.500l5 5l-5 5l-5-5z" fill="#20d020" stroke="#106010" stroke-width=".8"/></svg>
<div class="tr mono" style="left:68px;top:313px;width:50px;overflow:hidden;">nearframe</div>
<svg style="left:53px;top:325px" width="12" height="12" viewBox="0 0 12 12"><path d="M5.500 0.500l5 5l-5 5l-5-5z" fill="#20d020" stroke="#106010" stroke-width=".8"/></svg>
<div class="tr mono" style="left:68px;top:325px;width:50px;overflow:hidden;">nearframe</div>
<svg style="left:53px;top:337px" width="12" height="12" viewBox="0 0 12 12"><path d="M5.500 0.500l5 5l-5 5l-5-5z" fill="#20d020" stroke="#106010" stroke-width=".8"/></svg>
<div class="tr mono" style="left:68px;top:337px;width:50px;overflow:hidden;">outframe</div>
<svg style="left:37px;top:349px" width="12" height="12" viewBox="0 0 12 12"><text x="5.500" y="10.500" text-anchor="middle" font-family="Liberation Sans,sans-serif" font-weight="bold" font-size="16" fill="#ffee00" stroke="#101000" stroke-width="2" paint-order="stroke">t</text></svg>
<div class="tr mono" style="left:52.5px;top:349px;width:65.5px;overflow:hidden;">aec_input_p</div>
<svg style="left:37px;top:361px" width="12" height="12" viewBox="0 0 12 12"><rect x="0.500" y="0.500" width="10" height="9.500" fill="#20e0e0" stroke="#006868"/><rect x="1" y="1" width="9" height="1.200" fill="#a0ffff"/><path d="M3 4.500h4.500M3 4.500v3.500h4.500" stroke="#405858" stroke-width="1.100" fill="none"/><rect x="5" y="6" width="2" height="1.500" fill="#607070"/><path d="M1.500 10.800h10v-9" stroke="#707880" stroke-width="1" fill="none"/></svg>
<div class="tr mono" style="left:52.5px;top:361px;width:65.5px;overflow:hidden;">audio_aec_p</div>
<svg style="left:21px;top:373px" width="12" height="12" viewBox="0 0 12 12"><path d="M3.500 0.500v10M7.500 0.500v10M0.500 3.500h10M0.500 7.500h10" stroke="#202000" stroke-width="2.600"/><path d="M3.500 0.800v9.400M7.500 0.800v9.400M0.800 3.500h9.400M0.800 7.500h9.400" stroke="#ffe800" stroke-width="1.200"/></svg>
<div class="tr mono" style="left:37px;top:373px;width:81px;overflow:hidden;">endif</div>
<svg style="left:21px;top:385px" width="12" height="12" viewBox="0 0 12 12"><path d="M3.500 0.500v10M7.500 0.500v10M0.500 3.500h10M0.500 7.500h10" stroke="#202000" stroke-width="2.600"/><path d="M3.500 0.800v9.400M7.500 0.800v9.400M0.800 3.500h9.400M0.800 7.500h9.400" stroke="#ffe800" stroke-width="1.200"/></svg>
<div class="tr mono" style="left:37px;top:385px;width:81px;overflow:hidden;">ifdef WEBRTC_AG</div>
<svg style="left:37px;top:397px" width="12" height="12" viewBox="0 0 12 12"><rect x="0.500" y="0.500" width="10" height="9.500" fill="#20e0e0" stroke="#006868"/><rect x="1" y="1" width="9" height="1.200" fill="#a0ffff"/><path d="M3 4.500h4.500M3 4.500v3.500h4.500" stroke="#405858" stroke-width="1.100" fill="none"/><rect x="5" y="6" width="2" height="1.500" fill="#607070"/><path d="M1.500 10.800h10v-9" stroke="#707880" stroke-width="1" fill="none"/></svg>
<div class="tr mono" style="left:52.5px;top:397px;width:65.5px;overflow:hidden;">audio_agc_i</div>
<svg style="left:37px;top:409px" width="12" height="12" viewBox="0 0 12 12"><rect x="0.500" y="0.500" width="10" height="9.500" fill="#20e0e0" stroke="#006868"/><rect x="1" y="1" width="9" height="1.200" fill="#a0ffff"/><path d="M3 4.500h4.500M3 4.500v3.500h4.500" stroke="#405858" stroke-width="1.100" fill="none"/><rect x="5" y="6" width="2" height="1.500" fill="#607070"/><path d="M1.500 10.800h10v-9" stroke="#707880" stroke-width="1" fill="none"/></svg>
<div class="tr mono" style="left:52.5px;top:409px;width:65.5px;overflow:hidden;">audio_agc_p</div>
<svg style="left:21px;top:421px" width="12" height="12" viewBox="0 0 12 12"><path d="M3.500 0.500v10M7.500 0.500v10M0.500 3.500h10M0.500 7.500h10" stroke="#202000" stroke-width="2.600"/><path d="M3.500 0.800v9.400M7.500 0.800v9.400M0.800 3.500h9.400M0.800 7.500h9.400" stroke="#ffe800" stroke-width="1.200"/></svg>
<div class="tr mono" style="left:37px;top:421px;width:81px;overflow:hidden;">endif</div>
<svg style="left:21px;top:433px" width="12" height="12" viewBox="0 0 12 12"><rect x="0.500" y="0.500" width="10" height="9.500" fill="#20e0e0" stroke="#006868"/><rect x="1" y="1" width="9" height="1.200" fill="#a0ffff"/><path d="M3 4.500h4.500M3 4.500v3.500h4.500" stroke="#405858" stroke-width="1.100" fill="none"/><rect x="5" y="6" width="2" height="1.500" fill="#607070"/><path d="M1.500 10.800h10v-9" stroke="#707880" stroke-width="1" fill="none"/></svg>
<div class="tr mono" style="left:37px;top:433px;width:81px;overflow:hidden;">audio_3a_modul</div>
<svg style="left:21px;top:445px" width="12" height="12" viewBox="0 0 12 12"><path d="M3.500 0.500v10M7.500 0.500v10M0.500 3.500h10M0.500 7.500h10" stroke="#202000" stroke-width="2.600"/><path d="M3.500 0.800v9.400M7.500 0.800v9.400M0.800 3.500h9.400M0.800 7.500h9.400" stroke="#f02020" stroke-width="1.200"/></svg>
<div class="tr mono" style="left:37px;top:445px;width:81px;overflow:hidden;">DC_CANCELLATIO</div>
<svg style="left:21px;top:457px" width="12" height="12" viewBox="0 0 12 12"><path d="M3.500 0.500v10M7.500 0.500v10M0.500 3.500h10M0.500 7.500h10" stroke="#202000" stroke-width="2.600"/><path d="M3.500 0.800v9.400M7.500 0.800v9.400M0.800 3.500h9.400M0.800 7.500h9.400" stroke="#ffe800" stroke-width="1.200"/></svg>
<div class="tr mono" style="left:37px;top:457px;width:81px;overflow:hidden;">if DC_CANCELLA</div>
<svg style="left:37px;top:469px" width="12" height="12" viewBox="0 0 12 12"><rect x="0.500" y="0.500" width="10" height="9.500" fill="#20e0e0" stroke="#006868"/><rect x="1" y="1" width="9" height="1.200" fill="#a0ffff"/><path d="M3 4.500h4.500M3 4.500v3.500h4.500" stroke="#405858" stroke-width="1.100" fill="none"/><rect x="5" y="6" width="2" height="1.500" fill="#607070"/><path d="M1.500 10.800h10v-9" stroke="#707880" stroke-width="1" fill="none"/></svg>
<div class="tr mono" style="left:52.5px;top:469px;width:65.5px;overflow:hidden;">dc_cancella</div>
<svg style="left:21px;top:481px" width="12" height="12" viewBox="0 0 12 12"><path d="M3.500 0.500v10M7.500 0.500v10M0.500 3.500h10M0.500 7.500h10" stroke="#202000" stroke-width="2.600"/><path d="M3.500 0.800v9.400M7.500 0.800v9.400M0.800 3.500h9.400M0.800 7.500h9.400" stroke="#ffe800" stroke-width="1.200"/></svg>
<div class="tr mono" style="left:37px;top:481px;width:81px;overflow:hidden;">endif</div>
<svg style="left:21px;top:493px" width="12" height="12" viewBox="0 0 12 12"><rect x="0.500" y="0.500" width="10" height="9.500" fill="#20e0e0" stroke="#006868"/><rect x="1" y="1" width="9" height="1.200" fill="#a0ffff"/><path d="M3 4.500h4.500M3 4.500v3.500h4.500" stroke="#405858" stroke-width="1.100" fill="none"/><rect x="5" y="6" width="2" height="1.500" fill="#607070"/><path d="M1.500 10.800h10v-9" stroke="#707880" stroke-width="1" fill="none"/></svg>
<div class="tr mono" style="left:37px;top:493px;width:81px;overflow:hidden;">audio_3a_data_</div>
<svg style="left:21px;top:505px" width="12" height="12" viewBox="0 0 12 12"><rect x="0.500" y="0.500" width="10" height="9.500" fill="#20e0e0" stroke="#006868"/><rect x="1" y="1" width="9" height="1.200" fill="#a0ffff"/><path d="M3 4.500h4.500M3 4.500v3.500h4.500" stroke="#405858" stroke-width="1.100" fill="none"/><rect x="5" y="6" width="2" height="1.500" fill="#607070"/><path d="M1.500 10.800h10v-9" stroke="#707880" stroke-width="1" fill="none"/></svg>
<div class="tr mono" style="left:37px;top:505px;width:81px;overflow:hidden;">audio_3a_modul</div>
<svg style="left:21px;top:517px" width="12" height="12" viewBox="0 0 12 12"><path d="M0.500 0.500h7l3.500 3v6.500h-10.500z" fill="#20e0e0" stroke="#006868"/><path d="M3 5h4.500M3 5v3h4.500" stroke="#405858" stroke-width="1.100" fill="none"/><path d="M1.500 10.800h10v-6" stroke="#707880" stroke-width="1" fill="none"/></svg>
<div class="tr mono" style="left:37px;top:517px;width:81px;overflow:hidden;">bt_connect_get</div>
<svg style="left:21px;top:529px" width="12" height="12" viewBox="0 0 12 12"><rect x="0.500" y="0.500" width="10" height="9.500" fill="#20e0e0" stroke="#006868"/><rect x="1" y="1" width="9" height="1.200" fill="#a0ffff"/><path d="M3 4.500h4.500M3 4.500v3.500h4.500" stroke="#405858" stroke-width="1.100" fill="none"/><rect x="5" y="6" width="2" height="1.500" fill="#607070"/><path d="M1.500 10.800h10v-9" stroke="#707880" stroke-width="1" fill="none"/></svg>
<div class="tr mono" style="left:37px;top:529px;width:81px;overflow:hidden;">audio_3a_open</div>
<svg style="left:21px;top:541px" width="12" height="12" viewBox="0 0 12 12"><rect x="0.500" y="0.500" width="10" height="9.500" fill="#20e0e0" stroke="#006868"/><rect x="1" y="1" width="9" height="1.200" fill="#a0ffff"/><path d="M3 4.500h4.500M3 4.500v3.500h4.500" stroke="#405858" stroke-width="1.100" fill="none"/><rect x="5" y="6" width="2" height="1.500" fill="#607070"/><path d="M1.500 10.800h10v-9" stroke="#707880" stroke-width="1" fill="none"/></svg>
<div class="tr mono" style="left:37px;top:541px;width:81px;overflow:hidden;">audio_3a_close</div>
<svg style="left:21px;top:553px" width="12" height="12" viewBox="0 0 12 12"><rect x="0.500" y="0.500" width="10" height="9.500" fill="#20e0e0" stroke="#006868"/><rect x="1" y="1" width="9" height="1.200" fill="#a0ffff"/><path d="M3 4.500h4.500M3 4.500v3.500h4.500" stroke="#405858" stroke-width="1.100" fill="none"/><rect x="5" y="6" width="2" height="1.500" fill="#607070"/><path d="M1.500 10.800h10v-9" stroke="#707880" stroke-width="1" fill="none"/></svg>
<div class="tr mono" style="left:37px;top:553px;width:81px;overflow:hidden;">audio_3a_far_p</div>
<svg style="left:21px;top:565px" width="12" height="12" viewBox="0 0 12 12"><rect x="0.500" y="0.500" width="10" height="9.500" fill="#20e0e0" stroke="#006868"/><rect x="1" y="1" width="9" height="1.200" fill="#a0ffff"/><path d="M3 4.500h4.500M3 4.500v3.500h4.500" stroke="#405858" stroke-width="1.100" fill="none"/><rect x="5" y="6" width="2" height="1.500" fill="#607070"/><path d="M1.500 10.800h10v-9" stroke="#707880" stroke-width="1" fill="none"/></svg>
<div class="tr mono" style="left:37px;top:565px;width:81px;overflow:hidden;">audio_3a_dnlin</div>
<svg style="left:21px;top:577px" width="12" height="12" viewBox="0 0 12 12"><path d="M0.500 0.500h7l3.500 3v6.500h-10.500z" fill="#20e0e0" stroke="#006868"/><path d="M3 5h4.500M3 5v3h4.500" stroke="#405858" stroke-width="1.100" fill="none"/><path d="M1.500 10.800h10v-6" stroke="#707880" stroke-width="1" fill="none"/></svg>
<div class="tr mono" style="left:37px;top:577px;width:81px;overflow:hidden;">get_bt_debug</div>
<svg style="left:21px;top:589px" width="12" height="12" viewBox="0 0 12 12"><rect x="0.500" y="0.500" width="10" height="9.500" fill="#20e0e0" stroke="#006868"/><rect x="1" y="1" width="9" height="1.200" fill="#a0ffff"/><path d="M3 4.500h4.500M3 4.500v3.500h4.500" stroke="#405858" stroke-width="1.100" fill="none"/><rect x="5" y="6" width="2" height="1.500" fill="#607070"/><path d="M1.500 10.800h10v-9" stroke="#707880" stroke-width="1" fill="none"/></svg>
<div class="tr mono" style="left:37px;top:589px;width:81px;overflow:hidden;">audio_3a_downl</div>
<svg style="left:21px;top:601px" width="12" height="12" viewBox="0 0 12 12"><rect x="0.500" y="0.500" width="10" height="9.500" fill="#20e0e0" stroke="#006868"/><rect x="1" y="1" width="9" height="1.200" fill="#a0ffff"/><path d="M3 4.500h4.500M3 4.500v3.500h4.500" stroke="#405858" stroke-width="1.100" fill="none"/><rect x="5" y="6" width="2" height="1.500" fill="#607070"/><path d="M1.500 10.800h10v-9" stroke="#707880" stroke-width="1" fill="none"/></svg>
<div class="tr mono" style="left:37px;top:601px;width:81px;overflow:hidden;">audio_3a_uplin</div>
<svg style="left:21px;top:613px" width="12" height="12" viewBox="0 0 12 12"><path d="M3.500 0.500v10M7.500 0.500v10M0.500 3.500h10M0.500 7.500h10" stroke="#202000" stroke-width="2.600"/><path d="M3.500 0.800v9.400M7.500 0.800v9.400M0.800 3.500h9.400M0.800 7.500h9.400" stroke="#ffe800" stroke-width="1.200"/></svg>
<div class="tr mono" style="left:37px;top:613px;width:81px;overflow:hidden;">ifdef WEBRTC_AE</div>
<svg style="left:37px;top:625px" width="12" height="12" viewBox="0 0 12 12"><rect x="0.500" y="0.500" width="10" height="9.500" fill="#20e0e0" stroke="#006868"/><rect x="1" y="1" width="9" height="1.200" fill="#a0ffff"/><path d="M3 4.500h4.500M3 4.500v3.500h4.500" stroke="#405858" stroke-width="1.100" fill="none"/><rect x="5" y="6" width="2" height="1.500" fill="#607070"/><path d="M1.500 10.800h10v-9" stroke="#707880" stroke-width="1" fill="none"/></svg>
<div class="tr mono" style="left:52.5px;top:625px;width:65.5px;overflow:hidden;">set_3a_aec_</div>
<svg style="left:37px;top:637px" width="12" height="12" viewBox="0 0 12 12"><path d="M0.500 0.500h7l3.500 3v6.500h-10.500z" fill="#20e0e0" stroke="#006868"/><path d="M3 5h4.500M3 5v3h4.500" stroke="#405858" stroke-width="1.100" fill="none"/><path d="M1.500 10.800h10v-6" stroke="#707880" stroke-width="1" fill="none"/></svg>
<div class="tr mono" style="left:52.5px;top:637px;width:65.5px;overflow:hidden;">MSH_CMD_EXP</div>
<svg style="left:21px;top:649px" width="12" height="12" viewBox="0 0 12 12"><path d="M3.500 0.500v10M7.500 0.500v10M0.500 3.500h10M0.500 7.500h10" stroke="#202000" stroke-width="2.600"/><path d="M3.500 0.800v9.400M7.500 0.800v9.400M0.800 3.500h9.400M0.800 7.500h9.400" stroke="#ffe800" stroke-width="1.200"/></svg>
<div class="tr mono" style="left:37px;top:649px;width:81px;overflow:hidden;">endif</div>
<svg style="left:21px;top:661px" width="12" height="12" viewBox="0 0 12 12"><path d="M3.500 0.500v10M7.500 0.500v10M0.500 3.500h10M0.500 7.500h10" stroke="#202000" stroke-width="2.600"/><path d="M3.500 0.800v9.400M7.500 0.800v9.400M0.800 3.500h9.400M0.800 7.500h9.400" stroke="#ffe800" stroke-width="1.200"/></svg>
<div class="tr mono" style="left:37px;top:661px;width:81px;overflow:hidden;">ifdef AUDIO_3A</div>
<svg style="left:37px;top:673px" width="12" height="12" viewBox="0 0 12 12"><rect x="0.500" y="0.500" width="10" height="9.500" fill="#20e0e0" stroke="#006868"/><rect x="1" y="1" width="9" height="1.200" fill="#a0ffff"/><path d="M3 4.500h4.500M3 4.500v3.500h4.500" stroke="#405858" stroke-width="1.100" fill="none"/><rect x="5" y="6" width="2" height="1.500" fill="#607070"/><path d="M1.500 10.800h10v-9" stroke="#707880" stroke-width="1" fill="none"/></svg>
<div class="tr mono" style="left:52.5px;top:673px;width:65.5px;overflow:hidden;">read_3a_sta</div>
<svg style="left:37px;top:685px" width="12" height="12" viewBox="0 0 12 12"><path d="M0.500 0.500h7l3.500 3v6.500h-10.500z" fill="#20e0e0" stroke="#006868"/><path d="M3 5h4.500M3 5v3h4.500" stroke="#405858" stroke-width="1.100" fill="none"/><path d="M1.500 10.800h10v-6" stroke="#707880" stroke-width="1" fill="none"/></svg>
<div class="tr mono" style="left:52.5px;top:685px;width:65.5px;overflow:hidden;">MSH_CMD_EXP</div>
<svg style="left:21px;top:697px" width="12" height="12" viewBox="0 0 12 12"><path d="M3.500 0.500v10M7.500 0.500v10M0.500 3.500h10M0.500 7.500h10" stroke="#202000" stroke-width="2.600"/><path d="M3.500 0.800v9.400M7.500 0.800v9.400M0.800 3.500h9.400M0.800 7.500h9.400" stroke="#ffe800" stroke-width="1.200"/></svg>
<div class="tr mono" style="left:37px;top:697px;width:81px;overflow:hidden;">endif</div>
<svg style="left:21px;top:709px" width="12" height="12" viewBox="0 0 12 12"><path d="M3.500 0.500v10M7.500 0.500v10M0.500 3.500h10M0.500 7.500h10" stroke="#202000" stroke-width="2.600"/><path d="M3.500 0.800v9.400M7.500 0.800v9.400M0.800 3.500h9.400M0.800 7.500h9.400" stroke="#ffe800" stroke-width="1.200"/></svg>
<div class="tr mono" style="left:37px;top:709px;width:81px;overflow:hidden;">ifdef WEBRTC_AG</div>
<svg style="left:37px;top:721px" width="12" height="12" viewBox="0 0 12 12"><rect x="0.500" y="0.500" width="10" height="9.500" fill="#20e0e0" stroke="#006868"/><rect x="1" y="1" width="9" height="1.200" fill="#a0ffff"/><path d="M3 4.500h4.500M3 4.500v3.500h4.500" stroke="#405858" stroke-width="1.100" fill="none"/><rect x="5" y="6" width="2" height="1.500" fill="#607070"/><path d="M1.500 10.800h10v-9" stroke="#707880" stroke-width="1" fill="none"/></svg>
<div class="tr mono" style="left:52.5px;top:721px;width:65.5px;overflow:hidden;">set_3a_agc_</div>
<svg style="left:37px;top:733px" width="12" height="12" viewBox="0 0 12 12"><path d="M0.500 0.500h7l3.500 3v6.500h-10.500z" fill="#20e0e0" stroke="#006868"/><path d="M3 5h4.500M3 5v3h4.500" stroke="#405858" stroke-width="1.100" fill="none"/><path d="M1.500 10.800h10v-6" stroke="#707880" stroke-width="1" fill="none"/></svg>
<div class="tr mono" style="left:52.5px;top:733px;width:65.5px;overflow:hidden;">MSH_CMD_EXP</div>
<svg style="left:21px;top:745px" width="12" height="12" viewBox="0 0 12 12"><path d="M3.500 0.500v10M7.500 0.500v10M0.500 3.500h10M0.500 7.500h10" stroke="#202000" stroke-width="2.600"/><path d="M3.500 0.800v9.400M7.500 0.800v9.400M0.800 3.500h9.400M0.800 7.500h9.400" stroke="#ffe800" stroke-width="1.200"/></svg>
<div class="tr mono" style="left:37px;top:745px;width:81px;overflow:hidden;">endif</div>
<svg style="left:21px;top:757px" width="12" height="12" viewBox="0 0 12 12"><rect x="0.500" y="0.500" width="10" height="9.500" fill="#20e0e0" stroke="#006868"/><rect x="1" y="1" width="9" height="1.200" fill="#a0ffff"/><path d="M3 4.500h4.500M3 4.500v3.500h4.500" stroke="#405858" stroke-width="1.100" fill="none"/><rect x="5" y="6" width="2" height="1.500" fill="#607070"/><path d="M1.500 10.800h10v-9" stroke="#707880" stroke-width="1" fill="none"/></svg>
<div class="tr mono" style="left:37px;top:757px;width:81px;overflow:hidden;">webrtc_set_del</div>
<svg style="left:21px;top:769px" width="12" height="12" viewBox="0 0 12 12"><ellipse cx="5.500" cy="5.500" rx="5.300" ry="4" fill="#0000e8"/><path d="M2.500 4c1.500-1.300 4-1.300 5.500-.3" stroke="#a0a0ff" stroke-width=".9" fill="none"/></svg>
<div class="tr mono" style="left:37px;top:769px;width:81px;overflow:hidden;">g_record_time</div>
<svg style="left:21px;top:781px" width="12" height="12" viewBox="0 0 12 12"><rect x="0.500" y="0.500" width="10" height="9.500" fill="#20e0e0" stroke="#006868"/><rect x="1" y="1" width="9" height="1.200" fill="#a0ffff"/><path d="M3 4.500h4.500M3 4.500v3.500h4.500" stroke="#405858" stroke-width="1.100" fill="none"/><rect x="5" y="6" width="2" height="1.500" fill="#607070"/><path d="M1.500 10.800h10v-9" stroke="#707880" stroke-width="1" fill="none"/></svg>
<div class="tr mono" style="left:37px;top:781px;width:81px;overflow:hidden;background:#0078d7;color:#fff;">audio_command_</div>
<svg style="left:6px;top:793px" width="12" height="12" viewBox="0 0 12 12"><path d="M3.500 0.500v10M7.500 0.500v10M0.500 3.500h10M0.500 7.500h10" stroke="#202000" stroke-width="2.600"/><path d="M3.500 0.800v9.400M7.500 0.800v9.400M0.800 3.500h9.400M0.800 7.500h9.400" stroke="#ffe800" stroke-width="1.200"/></svg>
<div class="tr mono" style="left:21px;top:793px;width:97px;overflow:hidden;">endif</div>
</div>
<div class="abs sb" style="left:122px;top:111px;width:17px;height:795px"></div>
<div class="abs thumb" style="left:123px;top:620px;width:15px;height:265px"></div>
<svg style="left:125px;top:114.5px" width="11" height="11" viewBox="0 0 11 11"><path d="M2 7.3l3.5-3.6l3.5 3.6" fill="none" stroke="#585858" stroke-width="2.100"/></svg>
<svg style="left:125px;top:893px" width="11" height="11" viewBox="0 0 11 11"><path d="M2 3.700l3.500 3.600l3.500-3.600" fill="none" stroke="#585858" stroke-width="2.100"/></svg>
<div class="abs" style="left:0;top:906px;width:141px;height:30px;background:#fff"></div>
<div class="abs" style="left:32px;top:910px;width:24px;height:21px;background:#cce4f7;border:1px solid #99d1ff"></div>
<svg style="left:10px;top:913px" width="17" height="16" viewBox="0 0 17 16"><text x="0" y="12" font-family="Liberation Sans,sans-serif" font-size="11.500" fill="#000090" letter-spacing="-0.8">A-Z</text></svg>
<svg style="left:36.5px;top:913px" width="17" height="16" viewBox="0 0 17 16"><rect x="1.500" y="1.500" width="13" height="13.500" fill="#f4f4f4" stroke="#707070"/><path d="M3.500 4.500h1.500M3.500 7h1.500M3.500 9.500h1.500M3.500 12h1.500" stroke="#e02020" stroke-width="1.200"/><path d="M6.500 4.500h6.500M6.500 7h6.500M6.500 9.500h6.500M6.500 12h6.500" stroke="#e02020" stroke-width="1"/></svg>
<svg style="left:60px;top:913px" width="17" height="16" viewBox="0 0 17 16"><circle cx="4" cy="4" r="3.200" fill="#0000f0"/><rect x="9.500" y="1.500" width="6.500" height="5" fill="#30e0e0" stroke="#808080" stroke-width="1"/><path d="M2.500 9v5.500M5.500 9v5.500M1 10.700h6M1 13h6" stroke="#f01010" stroke-width="1.200"/><path d="M10.500 11v1h6" stroke="#807800" stroke-width="1" fill="none"/><path d="M9.500 10h6.500M12.700 10v5.500" stroke="#f0d800" stroke-width="1.900"/></svg>
<svg style="left:91.5px;top:913px" width="17" height="16" viewBox="0 0 17 16"><path d="M0.800 2.500c2-1.300 4.500-1.300 6.700 0v11.500c-2.200-1.300-4.700-1.300-6.700 0z" fill="#fff" stroke="#000090" stroke-width="1.300"/><path d="M7.500 2.500c2.200-1.300 4.700-1.300 6.700 0v11.500c-2-1.300-4.500-1.300-6.700 0z" fill="#fff" stroke="#000090" stroke-width="1.300"/><path d="M2.300 4.500h3.700M2.300 6.500h3.700M2.300 8.500h3.700M2.300 10.500h3.700M9 4.500h3.700M9 6.500h3.700M9 8.500h3.700M9 10.500h3.700" stroke="#707070" stroke-width=".9"/><path d="M1.500 15.200h13.500" stroke="#a0a0a0" stroke-width="1"/></svg>
<svg style="left:114.5px;top:913px" width="17" height="16" viewBox="0 0 17 16"><path d="M13 6v9.500h-10" stroke="#909090" fill="none"/><rect x="1" y="4.500" width="11" height="10" fill="#fff" stroke="#000" stroke-width="1.300"/><rect x="3.500" y="2.500" width="6" height="3" fill="#c8c8c8" stroke="#000"/><path d="M3 8.500h2M6 8.500h4M3 11.500h2M6 11.500h4" stroke="#000" stroke-width="1.300"/><path d="M7.500 6l5.500-4.500l2.500 2.500l-5.500 4z" fill="#a8a8a8" stroke="#404040" stroke-width=".8"/><path d="M9 5l3 2.500M11 3.500l2.500 2.500" stroke="#505050" stroke-width=".7"/><rect x="14.800" y="0.500" width="2" height="5.500" fill="#000090"/></svg><div class="abs sep" style="left:82px;top:912px;height:18px;background:#a0a0a0"></div>
<div class="abs" style="left:143px;top:65px;width:1px;height:872px;background:#909090"></div>
<div id="code" class="abs"><div id="gutter" class="abs"></div>
<div class="ln" style="top:7.45px"><span class="no" style="width:63.0px;position:relative;top:-1px">01211:</span><span class="t">void </span><span class="fn">audio<i>_</i>command<i>_</i>process</span><span class="p">(</span><span class="t">uint8<i>_</i>t </span><span class="st">*</span><span class="pd">cmd<i>_</i>1</span><span class="p">)</span></div>
<div class="ln" style="top:25.45px"><span class="no" style="width:63.0px">01212:</span><span class="p">{</span></div>
<div class="ln" style="top:43.45px"><span class="no" style="width:63.0px">01213:</span><span class="k">#if</span> <span class="n">1</span></div>
<div class="ln" style="top:60.45px"><span class="no" style="width:103.0px">01214:</span><span class="t">const char </span><span class="st">*</span><span class="ld">cmd</span><span class="op"> = </span><span class="p">(</span><span class="t">const char </span><span class="st">*</span><span class="p">)</span><span class="pr">cmd<i>_</i>1</span><span class="sc">;</span></div>
<div class="ln" style="top:77.45px"><span class="no" style="width:103.0px">01215:</span><span class="FC">LOG<i>_</i>I</span><span class="p">(</span><span class="s">"<b>-</b><b>-</b> dump cmd=[%s]"</span><span class="cm">, </span><span class="lr">cmd</span><span class="p">)</span><span class="sc">;</span></div>
<div class="ln" style="top:95.45px"><span class="no" style="width:103.0px">01216:</span><span class="k">if</span> <span class="p">(</span><span class="op">! </span><span class="fc">memcmp</span><span class="p">(</span><span class="lr">cmd</span><span class="cm">, </span><span class="s">"agc=1"</span><span class="cm">, </span><span class="n">5</span><span class="p">)</span><span class="p">)</span></div>
<div class="ln" style="top:112.45px"><span class="no" style="width:103.0px">01217:</span><span class="p">{</span></div>
<div class="ln" style="top:130.45px"><span class="no" style="width:143.0px">01218:</span><span class="g">g<i>_</i>u16<i>_</i>test<i>_</i>agc</span><span class="op"> = </span><span class="n">1</span><span class="sc">;</span></div>
<div class="ln" style="top:147.45px"><span class="no" style="width:103.0px">01219:</span><span class="p">}</span></div>
<div class="ln" style="top:165.45px"><span class="no" style="width:103.0px">01220:</span><span class="k">else if</span> <span class="p">(</span><span class="op">! </span><span class="fc">memcmp</span><span class="p">(</span><span class="lr">cmd</span><span class="cm">, </span><span class="s">"agc=0"</span><span class="cm">, </span><span class="n">5</span><span class="p">)</span><span class="p">)</span></div>
<div class="ln" style="top:182.45px"><span class="no" style="width:103.0px">01221:</span><span class="p">{</span></div>
<div class="ln" style="top:200.45px"><span class="no" style="width:143.0px">01222:</span><span class="g">g<i>_</i>u16<i>_</i>test<i>_</i>agc</span><span class="op"> = </span><span class="n">0</span><span class="sc">;</span></div>
<div class="ln" style="top:217.45px"><span class="no" style="width:103.0px">01223:</span><span class="p">}</span></div>
<div class="ln" style="top:235.45px"><span class="no" style="width:103.0px">01224:</span><span class="k">else if</span> <span class="p">(</span><span class="op">! </span><span class="fc">memcmp</span><span class="p">(</span><span class="lr">cmd</span><span class="cm">, </span><span class="s">"cng=0"</span><span class="cm">, </span><span class="n">5</span><span class="p">)</span><span class="p">)</span></div>
<div class="ln" style="top:252.45px"><span class="no" style="width:103.0px">01225:</span><span class="p">{</span></div>
<div class="ln" style="top:270.45px"><span class="no" style="width:143.0px">01226:</span><span class="g">g<i>_</i>cngMode</span><span class="op"> = </span><span class="c">AecmFalse</span><span class="sc">;</span></div>
<div class="ln" style="top:287.45px"><span class="no" style="width:103.0px">01227:</span><span class="p">}</span></div>
<div class="ln" style="top:305.45px"><span class="no" style="width:103.0px">01228:</span><span class="k">else if</span> <span class="p">(</span><span class="op">! </span><span class="fc">memcmp</span><span class="p">(</span><span class="lr">cmd</span><span class="cm">, </span><span class="s">"cng=1"</span><span class="cm">, </span><span class="n">5</span><span class="p">)</span><span class="p">)</span></div>
<div class="ln" style="top:322.45px"><span class="no" style="width:103.0px">01229:</span><span class="p">{</span></div>
<div class="ln" style="top:340.45px"><span class="no" style="width:143.0px">01230:</span><span class="g">g<i>_</i>cngMode</span><span class="op"> = </span><span class="c">AecmTrue</span><span class="sc">;</span></div>
<div class="ln" style="top:357.45px"><span class="no" style="width:103.0px">01231:</span><span class="p">}</span></div>
<div class="ln" style="top:375.45px"><span class="no" style="width:103.0px">01232:</span><span class="k">else if</span> <span class="p">(</span><span class="op">! </span><span class="fc">memcmp</span><span class="p">(</span><span class="lr">cmd</span><span class="cm">, </span><span class="s">"echo=3"</span><span class="cm">, </span><span class="n">6</span><span class="p">)</span><span class="p">)</span></div>
<div class="ln" style="top:392.45px"><span class="no" style="width:103.0px">01233:</span><span class="p">{</span></div>
<div class="ln" style="top:410.45px"><span class="no" style="width:143.0px">01234:</span><span class="g">g<i>_</i>echoMode</span><span class="op"> = </span><span class="e">kSpeakerphone</span><span class="sc">;</span></div>
<div class="ln" style="top:427.45px"><span class="no" style="width:103.0px">01235:</span><span class="p">}</span></div>
<div class="ln" style="top:445.45px"><span class="no" style="width:103.0px">01236:</span><span class="k">else if</span> <span class="p">(</span><span class="op">! </span><span class="fc">memcmp</span><span class="p">(</span><span class="lr">cmd</span><span class="cm">, </span><span class="s">"echo=4"</span><span class="cm">, </span><span class="n">6</span><span class="p">)</span><span class="p">)</span></div>
<div class="ln" style="top:462.45px"><span class="no" style="width:103.0px">01237:</span><span class="p">{</span></div>
<div class="ln" style="top:480.45px"><span class="no" style="width:143.0px">01238:</span><span class="g">g<i>_</i>echoMode</span><span class="op"> = </span><span class="e">kLoudSpeakerphone</span><span class="sc">;</span></div>
<div class="ln" style="top:497.45px"><span class="no" style="width:103.0px">01239:</span><span class="p">}</span></div>
<div class="ln" style="top:515.45px"><span class="no" style="width:103.0px">01240:</span><span class="k">else if</span> <span class="p">(</span><span class="op">! </span><span class="fc">memcmp</span><span class="p">(</span><span class="lr">cmd</span><span class="cm">, </span><span class="s">"rshift="</span><span class="cm">, </span><span class="n">7</span><span class="p">)</span><span class="p">)</span></div>
<div class="ln" style="top:532.45px"><span class="no" style="width:103.0px">01241:</span><span class="p">{</span></div>
<div class="ln" style="top:550.45px"><span class="no" style="width:143.0px">01242:</span><span class="g">g<i>_</i>aecm<i>_</i>real<i>_</i>shift</span><span class="op"> = </span><span class="fa">atoi</span><span class="p">(</span><span class="lr">cmd</span><span class="op"> + </span><span class="n">7</span><span class="p">)</span><span class="sc">;</span></div>
<div class="ln" style="top:567.45px"><span class="no" style="width:143.0px">01243:</span><span class="FC">LOG<i>_</i>I</span><span class="p">(</span><span class="s">"set aec real shift=%d"</span><span class="cm">, </span><span class="g">g<i>_</i>aecm<i>_</i>real<i>_</i>shift</span><span class="p">)</span><span class="sc">;</span></div>
<div class="ln" style="top:584.45px"><span class="no" style="width:103.0px">01244:</span><span class="p">}</span></div>
<div class="ln" style="top:602.45px"><span class="no" style="width:103.0px">01245:</span><span class="k">else if</span> <span class="p">(</span><span class="op">! </span><span class="fc">memcmp</span><span class="p">(</span><span class="lr">cmd</span><span class="cm">, </span><span class="s">"ishift="</span><span class="cm">, </span><span class="n">7</span><span class="p">)</span><span class="p">)</span></div>
<div class="ln" style="top:620.45px"><span class="no" style="width:103.0px">01246:</span><span class="p">{</span></div>
<div class="ln" style="top:637.45px"><span class="no" style="width:143.0px">01247:</span><span class="g">g<i>_</i>aecm<i>_</i>imag<i>_</i>shift</span><span class="op"> = </span><span class="fa">atoi</span><span class="p">(</span><span class="lr">cmd</span><span class="op"> + </span><span class="n">7</span><span class="p">)</span><span class="sc">;</span></div>
<div class="ln" style="top:654.45px"><span class="no" style="width:143.0px">01248:</span><span class="FC">LOG<i>_</i>I</span><span class="p">(</span><span class="s">"set aec imag shift=%d"</span><span class="cm">, </span><span class="g">g<i>_</i>aecm<i>_</i>imag<i>_</i>shift</span><span class="p">)</span><span class="sc">;</span></div>
<div class="ln" style="top:671.45px"><span class="no" style="width:103.0px">01249:</span><span class="p">}</span></div>
<div class="ln" style="top:689.45px"><span class="no" style="width:103.0px">01250:</span><span class="k">else if</span> <span class="p">(</span><span class="op">! </span><span class="fc">memcmp</span><span class="p">(</span><span class="lr">cmd</span><span class="cm">, </span><span class="s">"time="</span><span class="cm">, </span><span class="n">5</span><span class="p">)</span><span class="p">)</span></div>
<div class="ln" style="top:706.45px"><span class="no" style="width:103.0px">01251:</span><span class="p">{</span></div>
<div class="ln" style="top:724.45px"><span class="no" style="width:143.0px">01252:</span><span class="g">g<i>_</i>record<i>_</i>time</span><span class="op"> = </span><span class="fa">atoi</span><span class="p">(</span><span class="lr">cmd</span><span class="op"> + </span><span class="n">5</span><span class="p">)</span><span class="sc">;</span></div>
<div class="ln" style="top:741.45px"><span class="no" style="width:143.0px">01253:</span><span class="FC">LOG<i>_</i>I</span><span class="p">(</span><span class="s">"<b>-</b><b>-</b><b>-</b> dump timeout=%d"</span><span class="cm">, </span><span class="g">g<i>_</i>record<i>_</i>time</span><span class="p">)</span><span class="sc">;</span></div>
<div class="ln" style="top:758.45px"><span class="no" style="width:103.0px">01254:</span><span class="p">}</span></div>
<div class="ln" style="top:776.45px"><span class="no" style="width:103.0px">01255:</span><span class="k">else if</span> <span class="p">(</span><span class="op">! </span><span class="fc">memcmp</span><span class="p">(</span><span class="lr">cmd</span><span class="cm">, </span><span class="s">"rampin<i>_</i>mute="</span><span class="cm">, </span><span class="n">12</span><span class="p">)</span><span class="p">)</span></div>
<div class="ln" style="top:793.45px"><span class="no" style="width:103.0px">01256:</span><span class="p">{</span></div>
<div class="ln" style="top:811.45px"><span class="no" style="width:143.0px">01257:</span><span class="g">g<i>_</i>rampin<i>_</i>mute</span><span class="op"> = </span><span class="fa">atoi</span><span class="p">(</span><span class="lr">cmd</span><span class="op"> + </span><span class="n">12</span><span class="p">)</span><span class="sc">;</span></div>
<div class="ln" style="top:828.45px"><span class="no" style="width:143.0px">01258:</span><span class="FC">LOG<i>_</i>I</span><span class="p">(</span><span class="s">"set rampin mute time=%d"</span><span class="cm">, </span><span class="g">g<i>_</i>rampin<i>_</i>mute</span><span class="p">)</span><span class="sc">;</span></div>
</div>
<div class="abs sb" style="left:147px;top:919px;width:1406px;height:17px"></div>
<div class="abs thumb" style="left:162px;top:920px;width:1373px;height:15px"></div>
<svg style="left:147px;top:922px" width="11" height="11" viewBox="0 0 11 11"><path d="M7.300 2l-3.600 3.500l3.600 3.500" fill="none" stroke="#585858" stroke-width="2.100"/></svg>
<svg style="left:1540px;top:922px" width="11" height="11" viewBox="0 0 11 11"><path d="M3.700 2l3.600 3.500l-3.600 3.500" fill="none" stroke="#585858" stroke-width="2.100"/></svg>
<div class="abs sb" style="left:1553px;top:65px;width:16px;height:854px"></div>
<div class="abs thumb" style="left:1553px;top:796px;width:15px;height:28px"></div>
<svg style="left:1555px;top:70px" width="11" height="11" viewBox="0 0 11 11"><path d="M2 7.3l3.5-3.6l3.5 3.6" fill="none" stroke="#585858" stroke-width="2.100"/></svg>
<svg style="left:1555px;top:905px" width="11" height="11" viewBox="0 0 11 11"><path d="M2 3.700l3.500 3.600l3.500-3.600" fill="none" stroke="#585858" stroke-width="2.100"/></svg>
<div class="abs" style="left:1553px;top:919px;width:16px;height:18px;background:#fff"></div>
<div class="abs" style="left:1569px;top:65px;width:1px;height:872px;background:#e4e4e4"></div>
<div class="abs" style="left:1570px;top:65px;width:2px;height:872px;background:#a0a0a0"></div>
<div class="abs" style="left:1572px;top:65px;width:1px;height:872px;background:#c4c4c4"></div>
<div class="abs ptitle" style="left:1576px;top:68px;font-size:16px;letter-spacing:-0.1px">Solution2.0 Project</div>
<svg style="left:1724px;top:69px" width="24" height="16" viewBox="0 0 24 16"><g transform="scale(1.45,1.1)"><ellipse cx="9.500" cy="9.500" rx="7" ry="3.500" fill="none" stroke="#a8a8a8" stroke-width="1"/><ellipse cx="8.500" cy="8.300" rx="7" ry="3.600" fill="#fff" stroke="#000" stroke-width="1.100"/><path d="M2.300 9.500c-1.500-2.500 1.500-5 6-5.300" fill="none" stroke="#000" stroke-width="2.600"/><path d="M7.500 4.500l-2.500 2.200" stroke="#000" stroke-width="1.500"/><ellipse cx="9.500" cy="8.500" rx="3" ry="1.200" fill="none" stroke="#606060" stroke-width=".8"/></g></svg>
<svg style="left:1851px;top:71px" width="62" height="10" viewBox="0 0 62 10"><rect x="0.500" y="0.500" width="8" height="6" fill="#fff" stroke="#303030"/><rect x="4.500" y="3.500" width="4" height="5" fill="#c0c0c0" stroke="#303030"/><path d="M17 1h7" stroke="#202020" stroke-width="1.800"/><rect x="32.800" y="0.800" width="7.500" height="7.500" fill="#909090" stroke="#202020" stroke-width="1.300"/><path d="M32 1h9" stroke="#202020" stroke-width="1.800"/><path d="M49.500 1l7 7M56.500 1l-7 7" stroke="#101010" stroke-width="1.600"/></svg>
<div class="abs" style="left:1576px;top:89px;width:340px;height:20px;background:#fff;border:1px solid #7a7a7a"></div>
<svg style="left:1901px;top:96px" width="10" height="6" viewBox="0 0 10 6"><path d="M0.5 0.5l4.5 4.5l4.5-4.5" stroke="#505050" stroke-width="1.1" fill="none"/></svg>
<div id="flist" class="abs">
<div class="abs" style="left:0;top:0;width:320px;height:21px;background:#fff"></div>
<div class="abs" style="left:175px;top:0;width:1px;height:21px;background:#e0e0e0"></div>
<div class="abs" style="left:247px;top:0;width:1px;height:21px;background:#e0e0e0"></div>
<div class="abs mono" style="left:5px;top:4px;line-height:12px">File Name</div>
<div class="abs mono" style="left:218px;top:4px;line-height:12px">Size</div>
<div class="abs mono" style="left:254px;top:4px;line-height:12px">Modified</div>
<div class="fr mono" style="top:22px"><span class="a">At_utils.c (d:\watch2.0\sdk\rtos\</span><span class="b">2572</span><span class="c">2025/10/10</span></div>
<div class="fr mono ev" style="top:34px"><span class="a">Audio.c (d:\watch2.0\sdk\rtos</span><span class="b">15973</span><span class="c">2025/11/24</span></div>
<div class="fr mono" style="top:46px"><span class="a">Audio.h (d:\watch2.0\sdk\rtos</span><span class="b">8573</span><span class="c">2025/10/10</span></div>
<div class="fr mono ev" style="top:58px"><span class="a">Audioconvert.c (d:\watch2.0\s</span><span class="b">5401</span><span class="c">2025/10/10</span></div>
<div class="fr mono" style="top:70px"><span class="a">Audioconvert.h (d:\watch2.0\s</span><span class="b">3053</span><span class="c">2025/10/10</span></div>
<div class="fr mono ev" style="top:82px"><span class="a">Audiodsp.c (d:\watch2.0\sdk\ex</span><span class="b">4117</span><span class="c">2025/10/10</span></div>
<div class="fr mono" style="top:94px"><span class="a">Audiodsp.h (d:\watch2.0\sdk\ex</span><span class="b">2428</span><span class="c">2025/10/10</span></div>
<div class="fr mono ev" style="top:106px"><span class="a">Audiodsp_arm.h (d:\watch2.0\s</span><span class="b">984</span><span class="c">2025/11/17</span></div>
<div class="fr mono" style="top:118px"><span class="a">Audiodsp_init_arm.c (d:\watch2</span><span class="b">1148</span><span class="c">2025/11/17</span></div>
<div class="fr mono ev" style="top:130px"><span class="a">Audiodsp_init_neon.c (d:\watch</span><span class="b">1576</span><span class="c">2025/11/17</span></div>
<div class="fr mono" style="top:142px"><span class="a">Audioproc.h (d:\watch2.0\sdk\m</span><span class="b">2513</span><span class="c">2025/10/10</span></div>
<div class="fr mono sel" style="top:154px"><span class="a">Audio_3a.c (d:\watch2.0\sdk\m</span><span class="b">38206</span><span class="c">2025/11/27</span></div>
<div class="fr mono" style="top:166px"><span class="a">Audio_3a_dummy.c (d:\watch2.0</span><span class="b">1404</span><span class="c">2025/10/10</span></div>
<div class="fr mono ev" style="top:178px"><span class="a">Audio_3a_soundplus.c (d:\watch</span><span class="b">9782</span><span class="c">2025/10/10</span></div>
<div class="fr mono" style="top:190px"><span class="a">Audio_3a_webrtc_small_delay.c</span><span class="b">31545</span><span class="c">2025/10/10</span></div>
<div class="fr mono ev" style="top:202px"><span class="a">Audio_bt_voice.c (d:\watch2.0</span><span class="b">39342</span><span class="c">2025/10/10</span></div>
<div class="fr mono" style="top:214px"><span class="a">Audio_bt_voice_3sco.c (d:\wat</span><span class="b">27504</span><span class="c">2025/10/10</span></div>
<div class="fr mono ev" style="top:226px"><span class="a">Audio_cvsd.c (d:\watch2.0\sdk</span><span class="b">5062</span><span class="c">2025/10/10</span></div>
<div class="fr mono" style="top:238px"><span class="a">Audio_cvsd.h (d:\watch2.0\sdk</span><span class="b">870</span><span class="c">2025/10/10</span></div>
<div class="fr mono ev" style="top:250px"><span class="a">Audio_eq_config.c (d:\watch2.0</span><span class="b">765</span><span class="c">2025/10/10</span></div>
<div class="fr mono" style="top:262px"><span class="a">Audio_filter.c (d:\watch2.0\s</span><span class="b">9746</span><span class="c">2025/10/10</span></div>
<div class="fr mono ev" style="top:274px"><span class="a">Audio_filter.h (d:\watch2.0\s</span><span class="b">490</span><span class="c">2025/10/10</span></div>
<div class="fr mono" style="top:286px"><span class="a">Audio_frame_queue.c (d:\watch2</span><span class="b">4107</span><span class="c">2025/10/10</span></div>
<div class="fr mono ev" style="top:298px"><span class="a">Audio_frame_queue.h (d:\watch2</span><span class="b">2589</span><span class="c">2025/10/10</span></div>
<div class="fr mono" style="top:310px"><span class="a">Audio_freqshift.c (d:\watch2.0</span><span class="b">11071</span><span class="c">2025/10/10</span></div>
<div class="fr mono ev" style="top:322px"><span class="a">Audio_loopback_demo.c (d:\wat</span><span class="b">10045</span><span class="c">2025/10/10</span></div>
<div class="fr mono" style="top:334px"><span class="a">Audio_mem.c (d:\watch2.0\sdk\m</span><span class="b">7665</span><span class="c">2025/10/10</span></div>
<div class="fr mono ev" style="top:346px"><span class="a">Audio_mem.h (d:\watch2.0\sdk\m</span><span class="b">4547</span><span class="c">2025/10/10</span></div>
<div class="fr mono" style="top:358px"><span class="a">Audio_mp3ctrl.c (d:\watch2.0\</span><span class="b">74588</span><span class="c">2025/11/5</span></div>
<div class="fr mono ev" style="top:370px"><span class="a">Audio_mp3ctrl.h (d:\watch2.0\</span><span class="b">2575</span><span class="c">2025/10/10</span></div>
<div class="fr mono" style="top:382px"><span class="a">Audio_msbc_plc.c (d:\watch2.0</span><span class="b">14075</span><span class="c">2025/10/10</span></div>
<div class="fr mono ev" style="top:394px"><span class="a">Audio_msbc_plc.h (d:\watch2.0</span><span class="b">2355</span><span class="c">2025/10/10</span></div>
<div class="fr mono" style="top:406px"><span class="a">Audio_pa_api.c (d:\watch2.0\s</span><span class="b">2552</span><span class="c">2025/10/10</span></div>
<div class="fr mono ev" style="top:418px"><span class="a">Audio_pc.c (d:\watch2.0\sdk\m</span><span class="b">7489</span><span class="c">2025/11/25</span></div>
<div class="fr mono" style="top:430px"><span class="a">Audio_pc.h (d:\watch2.0\sdk\m</span><span class="b">2472</span><span class="c">2025/10/10</span></div>
<div class="fr mono ev" style="top:442px"><span class="a">Audio_pipe.c (d:\watch2.0\sdk</span><span class="b">8670</span><span class="c">2025/10/10</span></div>
<div class="fr mono" style="top:454px"><span class="a">Audio_pipe.h (d:\watch2.0\sdk</span><span class="b">2013</span><span class="c">2025/10/10</span></div>
<div class="fr mono ev" style="top:466px"><span class="a">Audio_recorder.c (d:\watch2.0</span><span class="b">15535</span><span class="c">2025/10/10</span></div>
<div class="fr mono" style="top:478px"><span class="a">Audio_server.c (d:\watch2.0\s</span><span class="b">148261</span><span class="c">2025/11/27</span></div>
<div class="fr mono ev" style="top:490px"><span class="a">Audio_server.h (d:\watch2.0\s</span><span class="b">11526</span><span class="c">2025/11/24</span></div>
<div class="fr mono" style="top:502px"><span class="a">Audio_server_3mics.c (d:\watch</span><span class="b">93901</span><span class="c">2025/11/25</span></div>
<div class="fr mono ev" style="top:514px"><span class="a">Audio_softeq.c (d:\watch2.0\s</span><span class="b">4044</span><span class="c">2025/10/10</span></div>
<div class="fr mono" style="top:526px"><span class="a">Audio_test_api.c (d:\watch2.0</span><span class="b">13622</span><span class="c">2025/10/10</span></div>
<div class="fr mono ev" style="top:538px"><span class="a">Audio_test_api.c (d:\watch2.0</span><span class="b">13554</span><span class="c">2025/10/10</span></div>
<div class="fr mono" style="top:550px"><span class="a">Audio_test_api.h (d:\watch2.0</span><span class="b">519</span><span class="c">2025/10/10</span></div>
<div class="fr mono ev" style="top:562px"><span class="a">Audio_test_demo.c (d:\watch2.0</span><span class="b">10295</span><span class="c">2025/10/10</span></div>
<div class="fr mono" style="top:574px"><span class="a">Aura.c (d:\watch2.0\sdk\extern</span><span class="b">3436</span><span class="c">2025/10/10</span></div>
<div class="fr mono ev" style="top:586px"><span class="a">Auth.c (d:\watch2.0\sdk\rtos\r</span><span class="b">75645</span><span class="c">2025/10/10</span></div>
<div class="fr mono" style="top:598px"><span class="a">Auth.c (d:\watch2.0\sdk\rtos\r</span><span class="b">75645</span><span class="c">2025/10/10</span></div>
<div class="fr mono ev" style="top:610px"><span class="a">Auth.h (d:\watch2.0\sdk\rtos\r</span><span class="b">2904</span><span class="c">2025/10/10</span></div>
<div class="fr mono" style="top:622px"><span class="a">Auth_none.c (d:\watch2.0\sdk\r</span><span class="b">3808</span><span class="c">2025/10/10</span></div>
<div class="fr mono ev" style="top:634px"><span class="a">Autoip.c (d:\watch2.0\sdk\rto</span><span class="b">20587</span><span class="c">2025/10/10</span></div>
<div class="fr mono" style="top:646px"><span class="a">Autoip.c (d:\watch2.0\sdk\rto</span><span class="b">20612</span><span class="c">2025/10/10</span></div>
<div class="fr mono ev" style="top:658px"><span class="a">Autoip.h (d:\watch2.0\sdk\rto</span><span class="b">3607</span><span class="c">2025/10/10</span></div>
<div class="fr mono" style="top:670px"><span class="a">Autoip.h (d:\watch2.0\sdk\rto</span><span class="b">3275</span><span class="c">2025/10/10</span></div>
<div class="fr mono ev" style="top:682px"><span class="a">Autoip.h (d:\watch2.0\sdk\rto</span><span class="b">3607</span><span class="c">2025/10/10</span></div>
<div class="fr mono" style="top:694px"><span class="a">Autoip.h (d:\watch2.0\sdk\rto</span><span class="b">3275</span><span class="c">2025/10/10</span></div>
<div class="fr mono ev" style="top:706px"><span class="a">Avcodec.h (d:\watch2.0\sdk\ex</span><span class="b">177595</span><span class="c">2025/11/24</span></div>
<div class="fr mono" style="top:718px"><span class="a">Avcodecres.rc (d:\watch2.0\sdk</span><span class="b">2075</span><span class="c">2025/10/10</span></div>
<div class="fr mono ev" style="top:730px"><span class="a">Avdct.c (d:\watch2.0\sdk\exter</span><span class="b">6095</span><span class="c">2025/10/10</span></div>
<div class="fr mono" style="top:742px"><span class="a">Avdct.h (d:\watch2.0\sdk\exter</span><span class="b">2654</span><span class="c">2025/10/10</span></div>
<div class="fr mono ev" style="top:754px"><span class="a">Avfft.c (d:\watch2.0\sdk\exter</span><span class="b">3960</span><span class="c">2025/10/10</span></div>
<div class="fr mono" style="top:766px"><span class="a">Avfft.h (d:\watch2.0\sdk\exter</span><span class="b">3229</span><span class="c">2025/10/10</span></div>
<div class="fr mono ev" style="top:778px"><span class="a">Avpacket.c (d:\watch2.0\sdk\ex</span><span class="b">19779</span><span class="c">2025/10/10</span></div>
<div class="fr mono" style="top:790px"><span class="a">Avpicture.c (d:\watch2.0\sdk\e</span><span class="b">3751</span><span class="c">2025/10/10</span></div>
</div>
<div class="abs sb" style="left:1897px;top:113px;width:17px;height:792px"></div>
<div class="abs thumb" style="left:1898px;top:180px;width:15px;height:17px"></div>
<svg style="left:1901px;top:116px" width="11" height="11" viewBox="0 0 11 11"><path d="M2 7.3l3.5-3.6l3.5 3.6" fill="none" stroke="#585858" stroke-width="2.100"/></svg>
<svg style="left:1901px;top:893px" width="11" height="11" viewBox="0 0 11 11"><path d="M2 3.700l3.500 3.600l3.500-3.600" fill="none" stroke="#585858" stroke-width="2.100"/></svg>
<div class="abs" style="left:1581px;top:909px;width:24px;height:21px;background:#cce4f7;border:1px solid #99d1ff"></div>
<svg style="left:1584px;top:912px" width="17" height="16" viewBox="0 0 17 16"><rect x="12.300" y="2.500" width="1" height="8" fill="#909090"/><rect x="1" y="1" width="11" height="13.500" fill="#fff" stroke="#000090" stroke-width="1.300"/><path d="M2.500 4.500h1M2.500 6.500h1M2.500 8.500h1M2.500 10.500h1M2.500 12.500h1" stroke="#404040" stroke-width="1"/><path d="M5 3.500h5M5 5.500h4M5 7.500h2" stroke="#606060" stroke-width="1"/><path d="M6.500 14.500v-6h2.500l1 1h4.500v1.500" fill="#ffff96" stroke="#000" stroke-width=".9"/><path d="M6.500 14.500l2.500-4h8.500l-3 4z" fill="#808000" stroke="#000" stroke-width=".9"/><path d="M8 15.500h7" stroke="#909090" stroke-width="1"/></svg>
<svg style="left:1608px;top:912px" width="17" height="16" viewBox="0 0 17 16"><rect x="0.700" y="1.700" width="15.600" height="13" fill="#fff" stroke="#000090" stroke-width="1.400"/><path d="M8.500 2v12.500" stroke="#000090" stroke-width="1.200"/><path d="M5 4.500h-1.500v7.500h1.500M3.500 8h1.500" stroke="#000090" stroke-width="1.100" fill="none"/><path d="M10.500 4.500h4M10.500 6.500h4M10.500 8.500h4M10.500 10.500h4M10.500 12.500h4" stroke="#707070" stroke-width="1" stroke-dasharray="1.500 .5"/></svg>
<svg style="left:1632px;top:912px" width="17" height="16" viewBox="0 0 17 16"><path d="M1.5 0.5h3l2 2v4h-5z" fill="#ffff96" stroke="#30308c" stroke-width=".9"/><path d="M9.5 0.5h3l2 2v4h-5z" fill="#ffff96" stroke="#30308c" stroke-width=".9"/><path d="M1.5 8.5h3l2 2v4h-5z" fill="#ffff96" stroke="#30308c" stroke-width=".9"/><path d="M9.5 8.5h3l2 2v4h-5z" fill="#ffff96" stroke="#30308c" stroke-width=".9"/></svg>
<svg style="left:1657px;top:912px" width="17" height="16" viewBox="0 0 17 16"><path d="M0.800 2.500c2-1.300 4.500-1.300 6.700 0v11.500c-2.200-1.300-4.700-1.300-6.700 0z" fill="#fff" stroke="#000090" stroke-width="1.300"/><path d="M7.500 2.500c2.200-1.300 4.700-1.300 6.700 0v11.500c-2-1.300-4.500-1.300-6.700 0z" fill="#fff" stroke="#000090" stroke-width="1.300"/><path d="M2.300 4.500h3.700M2.300 6.500h3.700M2.300 8.500h3.700M2.300 10.500h3.700M9 4.500h3.700M9 6.500h3.700M9 8.500h3.700M9 10.500h3.700" stroke="#707070" stroke-width=".9"/><path d="M1.500 15.200h13.500" stroke="#a0a0a0" stroke-width="1"/></svg>
<svg style="left:1680px;top:912px" width="17" height="16" viewBox="0 0 17 16"><circle cx="4" cy="4" r="3.200" fill="#0000f0"/><rect x="9.500" y="1.500" width="6.500" height="5" fill="#30e0e0" stroke="#808080" stroke-width="1"/><path d="M2.500 9v5.500M5.500 9v5.500M1 10.700h6M1 13h6" stroke="#f01010" stroke-width="1.200"/><path d="M10.500 11v1h6" stroke="#807800" stroke-width="1" fill="none"/><path d="M9.500 10h6.500M12.700 10v5.500" stroke="#f0d800" stroke-width="1.900"/></svg>
<svg style="left:1712px;top:912px" width="17" height="16" viewBox="0 0 17 16"><path d="M2 15.5h11l3-1h-12z" fill="#8a8a8a"/><path d="M1.5 13.5v-8h3l1 1h6v2" fill="#ffff96" stroke="#000"/><path d="M1.5 13.5l3-5h11l-3.5 5z" fill="#808000" stroke="#000"/><path d="M9 3c2-2.5 5-2 6 0.5M15.3 0.8v3h-3" fill="none" stroke="#000"/></svg>
<svg style="left:1736px;top:912px" width="17" height="16" viewBox="0 0 17 16"><g transform="translate(0,2.500)"><ellipse cx="9.500" cy="9.500" rx="7" ry="3.500" fill="none" stroke="#a8a8a8" stroke-width="1"/><ellipse cx="8.500" cy="8.300" rx="7" ry="3.600" fill="#fff" stroke="#000" stroke-width="1.100"/><path d="M2.300 9.500c-1.500-2.500 1.500-5 6-5.300" fill="none" stroke="#000" stroke-width="2.600"/><path d="M7.500 4.500l-2.500 2.200" stroke="#000" stroke-width="1.500"/><ellipse cx="9.500" cy="8.500" rx="3" ry="1.200" fill="none" stroke="#606060" stroke-width=".8"/></g><path d="M12.500 0v5M10 2.500h5" stroke="#0000d0" stroke-width="1.200"/></svg>
<svg style="left:1760px;top:912px" width="17" height="16" viewBox="0 0 17 16"><path d="M1.500 1.500h10l3 3v10h-13z" fill="#fff" stroke="#404040" stroke-width="1"/><path d="M11.500 1.500v3h3" fill="none" stroke="#404040" stroke-width="1"/><path d="M3.500 5.500h4M8.500 5.500h3M3.500 7.500h4M8.500 7.500h4M3.500 9.500h4M8.500 9.500h4M3.500 11.500h4M8.500 11.500h4" stroke="#404040" stroke-width="1"/><path d="M2.500 15.500h12.500v-10" stroke="#b0b0b0" fill="none"/></svg>
<svg style="left:1791px;top:912px" width="17" height="16" viewBox="0 0 17 16"><path d="M13 6v9.500h-10" stroke="#909090" fill="none"/><rect x="1" y="4.500" width="11" height="10" fill="#fff" stroke="#000" stroke-width="1.300"/><rect x="3.500" y="2.500" width="6" height="3" fill="#c8c8c8" stroke="#000"/><path d="M3 8.500h2M6 8.500h4M3 11.500h2M6 11.500h4" stroke="#000" stroke-width="1.300"/><path d="M7.500 6l5.500-4.500l2.500 2.500l-5.500 4z" fill="#a8a8a8" stroke="#404040" stroke-width=".8"/><path d="M9 5l3 2.500M11 3.500l2.500 2.500" stroke="#505050" stroke-width=".7"/><rect x="14.800" y="0.500" width="2" height="5.500" fill="#000090"/></svg><div class="abs sep" style="left:1703px;top:911px;height:18px;background:#a0a0a0"></div><div class="abs sep" style="left:1783px;top:911px;height:18px;background:#a0a0a0"></div>
<div class="abs" style="left:0;top:936px;width:1920px;height:1px;background:#e4e4e4"></div>
<div class="abs" style="left:0;top:937px;width:1920px;height:3px;background:#bebebe"></div>
<div class="abs ptitle" style="left:3px;top:942px;font-size:15px;text-shadow:1px 1px 0 #a0a8b8">if</div>
<svg style="left:22px;top:943px" width="22" height="16" viewBox="0 0 22 16"><g transform="scale(1.35,1)"><path d="M3.500 3.500h11l-1.500 10h-11z" fill="none" stroke="#101010" stroke-width="1.100"/><path d="M6.500 9.500h4v-3.500z" fill="#a0a0a0" stroke="#303030" stroke-width=".8"/><circle cx="3.500" cy="3.500" r="1.900" fill="#686868"/><circle cx="14.500" cy="3.500" r="1.900" fill="#686868"/><circle cx="2" cy="13.500" r="1.900" fill="#686868"/><circle cx="13" cy="13.500" r="1.900" fill="#686868"/></g></svg>
<svg style="left:1851px;top:946px" width="62" height="10" viewBox="0 0 62 10"><rect x="0.500" y="0.500" width="8" height="6" fill="#fff" stroke="#303030"/><rect x="4.500" y="3.500" width="4" height="5" fill="#c0c0c0" stroke="#303030"/><path d="M17 1h7" stroke="#202020" stroke-width="1.800"/><rect x="32.800" y="0.800" width="7.500" height="7.500" fill="#909090" stroke="#202020" stroke-width="1.300"/><path d="M32 1h9" stroke="#202020" stroke-width="1.800"/><path d="M49.500 1l7 7M56.500 1l-7 7" stroke="#101010" stroke-width="1.600"/></svg>
<div class="abs" style="left:3px;top:964px;width:1912px;height:1px;background:#8c8c8c"></div>
<div class="abs" style="left:3px;top:964px;width:1px;height:17px;background:#8c8c8c"></div>
<div class="abs mono" style="left:5px;top:966px;line-height:12px">if</div>
<div class="abs" style="left:3px;top:985px;width:1912px;height:1px;background:#8c8c8c"></div>
<div class="abs" style="left:3px;top:985px;width:1px;height:9px;background:#8c8c8c"></div>
<div class="abs" style="left:1899px;top:987px;width:16px;height:7px;background:#f0f0f0"></div>
<svg style="left:11px;top:999px" width="17" height="16" viewBox="0 0 17 16"><rect x="14.500" y="2" width="1" height="12" fill="#a0a0a0"/><rect x="5" y="1" width="9" height="12" fill="#fff" stroke="#000090" stroke-width="1.300"/><path d="M10 3.500h2.500M10 5.500h2.500M10 7.500h2.500" stroke="#b0b0b0" stroke-width="1"/><path d="M1.800 9.500v3c0 2 1 3 2.700 3h2.200c1.500 0 2.500-1 2.500-2.500v-4h-1.400v-6.300h-1.500v6h-.6v-1h-1.200v1h-.6v-.6h-1.100z" fill="#f4e800" stroke="#504000" stroke-width=".8"/></svg>
<svg style="left:36px;top:999px" width="17" height="16" viewBox="0 0 17 16"><text x="-0.500" y="10.500" font-family="Liberation Sans,sans-serif" font-weight="bold" font-size="11" fill="#fcf400" stroke="#909000" stroke-width=".3">?</text><rect x="15" y="5" width="1" height="10" fill="#a0a0a0"/><rect x="8" y="14.500" width="8" height="1" fill="#a0a0a0"/><rect x="6.700" y="3.700" width="8" height="10.500" fill="#fff" stroke="#000090" stroke-width="1.400"/><path d="M9 6.500h3.500M9 8.500h3.500M9 10.500h3.500" stroke="#b8b8b8" stroke-width="1"/></svg>
<svg style="left:60px;top:999px" width="17" height="16" viewBox="0 0 17 16"><path d="M0.800 2.500c2-1.300 4.500-1.300 6.700 0v11.500c-2.200-1.300-4.700-1.300-6.700 0z" fill="#fff" stroke="#000090" stroke-width="1.300"/><path d="M7.500 2.500c2.200-1.300 4.700-1.300 6.700 0v11.500c-2-1.300-4.500-1.300-6.700 0z" fill="#fff" stroke="#000090" stroke-width="1.300"/><path d="M2.300 4.500h3.700M2.300 6.500h3.700M2.300 8.500h3.700M2.300 10.500h3.700M9 4.500h3.700M9 6.500h3.700M9 8.500h3.700M9 10.500h3.700" stroke="#707070" stroke-width=".9"/><path d="M1.500 15.200h13.500" stroke="#a0a0a0" stroke-width="1"/></svg>
<svg style="left:84px;top:999px" width="17" height="16" viewBox="0 0 17 16"><text x="1" y="13.500" font-family="Liberation Serif,serif" font-weight="bold" font-style="italic" font-size="16" fill="#000090" stroke="#000090" stroke-width=".6" transform="skewX(-12) translate(3,0) scale(1.15,1)">R</text><path d="M1 6c2-3 8-4.500 14-3.500" stroke="#000090" stroke-width="1.500" fill="none"/><path d="M9 10l6 4.500" stroke="#000090" stroke-width="1.600"/><path d="M3 15.500h9" stroke="#a0a0a0" stroke-width="1"/></svg>
<svg style="left:107px;top:999px" width="17" height="16" viewBox="0 0 17 16"><text x="0" y="12" font-family="Liberation Sans,sans-serif" font-size="11" fill="#000090" letter-spacing="-0.9">Ab</text><path d="M11 8.500h4" stroke="#000090" stroke-width="1.200"/><path d="M17 8.500l-3-2.500v5z" fill="#000090"/></svg>
<svg style="left:141px;top:999px" width="17" height="16" viewBox="0 0 17 16"><path d="M4 7v-2.500c0-4 6.500-4 6.500 0v2.500" fill="none" stroke="#808080" stroke-width="1.400"/><rect x="1.500" y="7" width="11.500" height="7.500" fill="#606060"/><rect x="1.500" y="7" width="11.500" height="1.500" fill="#909090"/></svg>
<svg style="left:171px;top:999px" width="17" height="16" viewBox="0 0 17 16"><path d="M13 6v9.500h-10" stroke="#909090" fill="none"/><rect x="1" y="4.500" width="11" height="10" fill="#fff" stroke="#000" stroke-width="1.300"/><rect x="3.500" y="2.500" width="6" height="3" fill="#c8c8c8" stroke="#000"/><path d="M3 8.500h2M6 8.500h4M3 11.500h2M6 11.500h4" stroke="#000" stroke-width="1.300"/><path d="M7.500 6l5.500-4.500l2.500 2.500l-5.500 4z" fill="#a8a8a8" stroke="#404040" stroke-width=".8"/><path d="M9 5l3 2.500M11 3.500l2.500 2.500" stroke="#505050" stroke-width=".7"/><rect x="14.800" y="0.500" width="2" height="5.500" fill="#000090"/></svg><div class="abs sep" style="left:130px;top:998px;height:18px;background:#a0a0a0"></div><div class="abs sep" style="left:162px;top:998px;height:18px;background:#a0a0a0"></div>
<div class="abs" style="left:0;top:1021px;width:1920px;height:2px;background:#b4b4b4"></div>
<div class="abs" style="left:0;top:1023px;width:1920px;height:7px;background:#f0f0f0"></div>
<div class="abs" style="left:11px;top:1025px;width:1855px;height:8px;border-top:1px solid #a0a0a0;border-left:1px solid #a0a0a0;background:#f0f0f0"></div>
<div class="abs" style="left:1876px;top:1025px;width:34px;height:8px;border-top:1px solid #a0a0a0;border-left:1px solid #a0a0a0;background:#f0f0f0"></div>
<div class="abs mono" style="left:22px;top:1026px;line-height:12px">Line 1253  Col 28   audio_command_process</div>
<div class="abs mono" style="left:1884px;top:1026px;line-height:12px">INS</div>
<div class="abs" style="left:144px;top:61px;width:749px;height:879px;border:3px solid #ed1c24"></div>
<div class="abs" style="left:151px;top:753px;width:610px;height:88px;border:3px solid #ed1c24"></div>
</body></html>
